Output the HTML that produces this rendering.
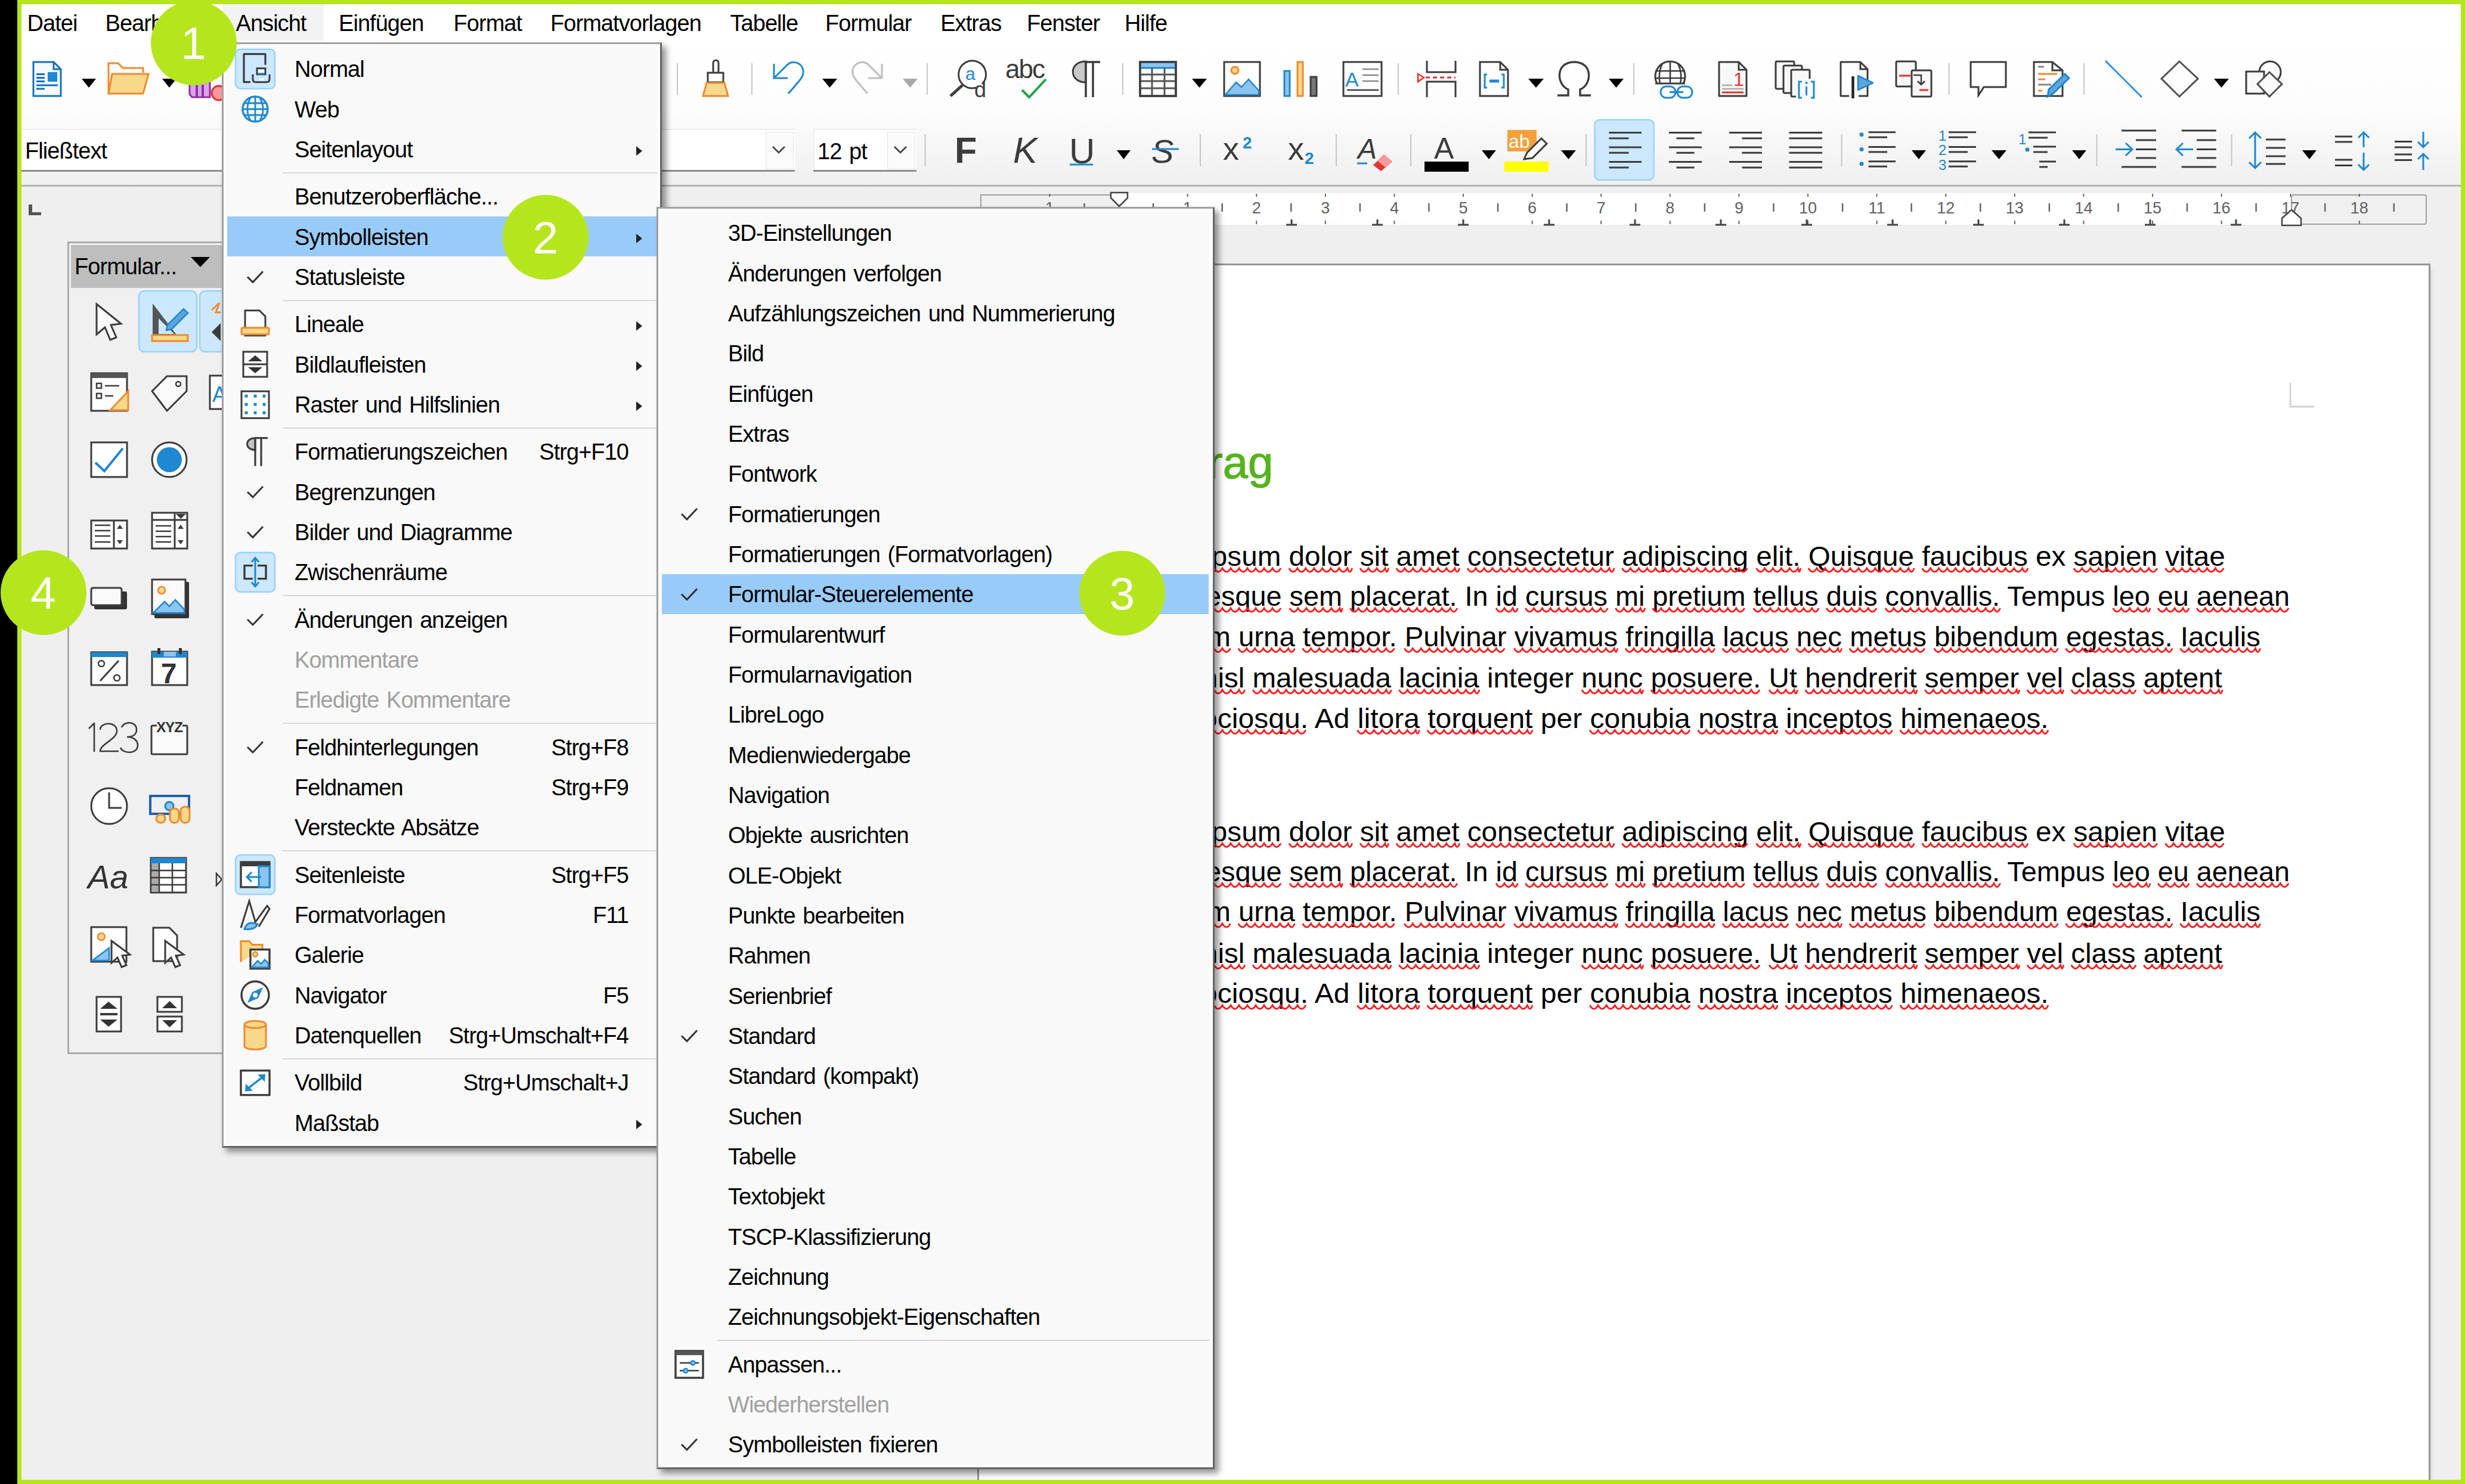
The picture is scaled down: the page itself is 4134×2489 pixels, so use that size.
<!DOCTYPE html><html><head><meta charset="utf-8"><title>LibreOffice Writer - Ansicht Symbolleisten</title><style>
html,body{margin:0;padding:0;}
body{width:4134px;height:2489px;position:relative;overflow:hidden;background:#000;font-family:"Liberation Sans", sans-serif;}
.t{position:absolute;line-height:1;white-space:nowrap;}
</style></head><body>
<div style="position:absolute;left:36px;top:7px;width:4091px;height:2475px;background:#efefef"></div>
<div style="position:absolute;left:36px;top:7px;width:4091px;height:63px;background:#ffffff"></div>
<div style="position:absolute;left:374px;top:7px;width:169px;height:61px;background:#f3f3f3"></div>
<div class="t" style="left:45.5px;top:20.3px;font-size:38px;color:#000;letter-spacing:-0.95px;font-weight:normal;word-spacing:3px;">Datei</div>
<div class="t" style="left:176.5px;top:20.3px;font-size:38px;color:#000;letter-spacing:-0.95px;font-weight:normal;word-spacing:3px;">Bearbeiten</div>
<div class="t" style="left:395.5px;top:20.3px;font-size:38px;color:#000;letter-spacing:-0.95px;font-weight:normal;word-spacing:3px;">Ansicht</div>
<div class="t" style="left:568.0px;top:20.3px;font-size:38px;color:#000;letter-spacing:-0.95px;font-weight:normal;word-spacing:3px;">Einfügen</div>
<div class="t" style="left:760.5px;top:20.3px;font-size:38px;color:#000;letter-spacing:-0.95px;font-weight:normal;word-spacing:3px;">Format</div>
<div class="t" style="left:923.0px;top:20.3px;font-size:38px;color:#000;letter-spacing:-0.95px;font-weight:normal;word-spacing:3px;">Formatvorlagen</div>
<div class="t" style="left:1224.5px;top:20.3px;font-size:38px;color:#000;letter-spacing:-0.95px;font-weight:normal;word-spacing:3px;">Tabelle</div>
<div class="t" style="left:1384.1px;top:20.3px;font-size:38px;color:#000;letter-spacing:-0.95px;font-weight:normal;word-spacing:3px;">Formular</div>
<div class="t" style="left:1577.2px;top:20.3px;font-size:38px;color:#000;letter-spacing:-0.95px;font-weight:normal;word-spacing:3px;">Extras</div>
<div class="t" style="left:1722.1px;top:20.3px;font-size:38px;color:#000;letter-spacing:-0.95px;font-weight:normal;word-spacing:3px;">Fenster</div>
<div class="t" style="left:1886.0px;top:20.3px;font-size:38px;color:#000;letter-spacing:-0.95px;font-weight:normal;word-spacing:3px;">Hilfe</div>
<div style="position:absolute;left:36px;top:70px;width:4091px;height:241px;background:linear-gradient(to bottom,#ffffff 0%,#fdfdfd 45%,#f6f6f6 75%,#efefef 100%)"></div>
<div style="position:absolute;left:36px;top:310px;width:4091px;height:3px;background:#b4b4b4"></div>
<div style="position:absolute;left:36px;top:216px;width:1297px;height:70px;background:#ffffff;box-shadow:inset 0 2px 0 #ececec"></div>
<div style="position:absolute;left:36px;top:285px;width:1297px;height:3px;background:#8c8c8c"></div>
<div class="t" style="left:42.0px;top:233.8px;font-size:38px;color:#000;letter-spacing:-0.95px;font-weight:normal;word-spacing:3px;">Fließtext</div>
<div style="position:absolute;left:1284px;top:221px;width:47px;height:63px;background:#fbfbfb;box-shadow:inset 0 0 0 1px #e4e4e4"></div>
<div style="position:absolute;left:1364px;top:216px;width:173px;height:70px;background:#ffffff;box-shadow:inset 0 2px 0 #ececec, inset 2px 0 0 #f0f0f0"></div>
<div style="position:absolute;left:1364px;top:285px;width:173px;height:3px;background:#8c8c8c"></div>
<div style="position:absolute;left:1488px;top:221px;width:47px;height:63px;background:#fbfbfb;box-shadow:inset 0 0 0 1px #e4e4e4"></div>
<div class="t" style="left:1371.0px;top:234.8px;font-size:38px;color:#000;letter-spacing:-0.95px;font-weight:normal;word-spacing:3px;">12 pt</div>
<svg style="position:absolute;left:0px;top:60px;" width="4134" height="260" viewBox="0 60 4134 260"><path d="M56,104 H90 L102,116 V161 H56 Z" stroke="#1470bf" stroke-width="3.0" fill="#f7f9fc" /><path d="M90,104 V116 H102" stroke="#1470bf" stroke-width="3.0" fill="none" /><line x1="61" y1="124.5" x2="75" y2="124.5" stroke="#1470bf" stroke-width="3" stroke-linecap="butt"/><line x1="61" y1="130.5" x2="75" y2="130.5" stroke="#1470bf" stroke-width="3" stroke-linecap="butt"/><line x1="61" y1="136.5" x2="75" y2="136.5" stroke="#1470bf" stroke-width="3" stroke-linecap="butt"/><line x1="61" y1="143" x2="97" y2="143" stroke="#1470bf" stroke-width="3" stroke-linecap="butt"/><line x1="61" y1="149" x2="75" y2="149" stroke="#1470bf" stroke-width="3" stroke-linecap="butt"/><rect x="80" y="121" width="16" height="16" stroke="none" stroke-width="3.0" fill="#1e88d0" rx="0"/><polygon points="137,132 161,132 149.0,147" fill="#000"/><path d="M182,157 V106 H198 L206,114 H240 V122" stroke="#ef8a2e" stroke-width="3.0" fill="#fafafa" /><path d="M188,124 H249 L240,157 H182 Z" stroke="#ef8a2e" stroke-width="3.0" fill="#f8d98b" /><polygon points="272,132 296,132 284.0,147" fill="#000"/><path d="M318,130 H352 V163 H322 L318,158 Z" stroke="#8f2ea6" stroke-width="3.0" fill="#d9a3e6" /><line x1="330" y1="142" x2="330" y2="162" stroke="#8f2ea6" stroke-width="4" stroke-linecap="butt"/><line x1="340" y1="142" x2="340" y2="162" stroke="#8f2ea6" stroke-width="4" stroke-linecap="butt"/><circle cx="367" cy="156" r="12" stroke="#e5312f" stroke-width="3.0" fill="#f99"/><rect x="1135" y="106" width="2" height="53" fill="#c6c6c6"/><rect x="1196" y="101" width="9" height="22" stroke="#3c3c3c" stroke-width="3.0" fill="#fff" rx="4.5"/><rect x="1187" y="122" width="26" height="16" stroke="#3c3c3c" stroke-width="3.0" fill="#fff" rx="0"/><path d="M1185,139 H1215 L1221,161 H1179 Z" stroke="#ef8a2e" stroke-width="3.0" fill="#f8d98b" /><rect x="1260" y="106" width="2" height="53" fill="#c6c6c6"/><path d="M1298,107 V131 H1321" stroke="#1e88d0" stroke-width="3.0" fill="none" /><path d="M1299,130 L1320,109 C1330,99 1349,106 1347,123 C1346,131 1340,136 1322,157" stroke="#1e88d0" stroke-width="3.0" fill="none" /><polygon points="1379,132 1404,132 1391.5,147" fill="#000"/><path d="M1479,107 V131 H1456" stroke="#bdbdbd" stroke-width="3.0" fill="none" /><path d="M1478,130 L1457,109 C1447,99 1428,106 1430,123 C1431,131 1437,136 1455,157" stroke="#bdbdbd" stroke-width="3.0" fill="none" /><polygon points="1514,132 1539,132 1526.5,147" fill="#a9a9a9"/><rect x="1554" y="106" width="2" height="53" fill="#c6c6c6"/><path d="M1647,141 A23,23 0 1 0 1637,147" stroke="#3c3c3c" stroke-width="3" fill="none" /><line x1="1594" y1="161" x2="1614" y2="143" stroke="#3c3c3c" stroke-width="5" stroke-linecap="butt"/><text x="1619" y="134" font-family="Liberation Sans" font-size="30" fill="#1e88d0" font-weight="normal" font-style="normal" text-anchor="start" letter-spacing="0">a</text><text x="1634" y="163" font-family="Liberation Sans" font-size="36" fill="#3c3c3c" font-weight="normal" font-style="normal" text-anchor="start" letter-spacing="0">d</text><text x="1686" y="131" font-family="Liberation Sans" font-size="44" fill="#3c3c3c" font-weight="normal" font-style="normal" text-anchor="start" letter-spacing="-2">abc</text><path d="M1714,151 L1726,163 L1754,133" stroke="#1ea446" stroke-width="4" fill="none" /><path d="M1821,103 C1792,103 1792,138 1821,138 Z" stroke="#3c3c3c" stroke-width="3" fill="#c8c8c8" /><line x1="1819" y1="104" x2="1845" y2="104" stroke="#3c3c3c" stroke-width="3.5" stroke-linecap="butt"/><line x1="1821" y1="103" x2="1821" y2="163" stroke="#3c3c3c" stroke-width="3.5" stroke-linecap="butt"/><line x1="1833" y1="103" x2="1833" y2="163" stroke="#3c3c3c" stroke-width="3.5" stroke-linecap="butt"/><rect x="1882" y="106" width="2" height="53" fill="#c6c6c6"/><rect x="1912" y="104" width="60" height="57" stroke="#3c3c3c" stroke-width="3.0" fill="#fff" rx="0"/><rect x="1912" y="104" width="60" height="10" stroke="#1e88d0" stroke-width="3" fill="#8cc4ee" rx="0"/><line x1="1912" y1="125" x2="1972" y2="125" stroke="#555" stroke-width="3" stroke-linecap="butt"/><line x1="1912" y1="136" x2="1972" y2="136" stroke="#555" stroke-width="3" stroke-linecap="butt"/><line x1="1912" y1="148" x2="1972" y2="148" stroke="#555" stroke-width="3" stroke-linecap="butt"/><line x1="1932" y1="114" x2="1932" y2="161" stroke="#555" stroke-width="3" stroke-linecap="butt"/><line x1="1953" y1="114" x2="1953" y2="161" stroke="#555" stroke-width="3" stroke-linecap="butt"/><rect x="1912" y="104" width="60" height="57" stroke="#3c3c3c" stroke-width="3.4" fill="none" rx="0"/><polygon points="1999,132 2024,132 2011.5,147" fill="#000"/><rect x="2053" y="104" width="60" height="57" stroke="#3c3c3c" stroke-width="3.0" fill="#fff" rx="0"/><path d="M2055,159 L2073,138 L2082,146 L2094,133 L2111,152 V159 Z" stroke="#1e88d0" stroke-width="2.5" fill="#8cc4ee" /><circle cx="2071" cy="118" r="6" stroke="#ef8a2e" stroke-width="3.0" fill="#f8d98b"/><rect x="2154" y="119" width="9" height="42" stroke="#1e88d0" stroke-width="3.0" fill="#8cc4ee" rx="0"/><rect x="2176" y="104" width="9" height="57" stroke="#ef8a2e" stroke-width="3.0" fill="#f8d98b" rx="0"/><rect x="2198" y="129" width="10" height="32" stroke="#3c3c3c" stroke-width="3.0" fill="#777" rx="0"/><rect x="2253" y="104" width="64" height="57" stroke="#3c3c3c" stroke-width="3.0" fill="#fff" rx="0"/><text x="2256" y="145" font-family="Liberation Sans" font-size="34" fill="#1e88d0" font-weight="normal" font-style="normal" text-anchor="start" letter-spacing="0">A</text><line x1="2285" y1="116" x2="2312" y2="116" stroke="#888" stroke-width="2.5" stroke-linecap="butt"/><line x1="2285" y1="126" x2="2312" y2="126" stroke="#888" stroke-width="2.5" stroke-linecap="butt"/><line x1="2285" y1="136" x2="2312" y2="136" stroke="#888" stroke-width="2.5" stroke-linecap="butt"/><line x1="2259" y1="151" x2="2312" y2="151" stroke="#3c3c3c" stroke-width="2.5" stroke-linecap="butt"/><rect x="2344" y="106" width="2" height="53" fill="#c6c6c6"/><path d="M2393,102 V121 H2441 V102" stroke="#3c3c3c" stroke-width="3" fill="none" /><path d="M2393,163 V137 H2441 V163" stroke="#3c3c3c" stroke-width="3" fill="none" /><path d="M2391,130 H2441" stroke="#e5312f" stroke-width="3" fill="none" stroke-dasharray="7 5"/><polygon points="2378,124 2388,130 2378,137" fill="none" stroke="#e5312f" stroke-width="2.5"/><path d="M2482,104 H2516 L2529,117 V161 H2482 Z" stroke="#3c3c3c" stroke-width="3.0" fill="#fff" /><path d="M2516,104 V117 H2529" stroke="#3c3c3c" stroke-width="3" fill="none" /><path d="M2494,125 H2490 V147 H2494 M2518,125 H2522 V147 H2518" stroke="#1e88d0" stroke-width="3" fill="none" /><line x1="2498" y1="136" x2="2514" y2="136" stroke="#1e88d0" stroke-width="5" stroke-linecap="butt"/><polygon points="2563,132 2589,132 2576.0,147" fill="#000"/><path d="M2612,160 H2630 V150 C2610,142 2608,104 2640,104 C2672,104 2670,142 2650,150 V160 H2668" stroke="#3c3c3c" stroke-width="3.4" fill="none" /><polygon points="2698,132 2723,132 2710.5,147" fill="#000"/><rect x="2739" y="106" width="2" height="53" fill="#c6c6c6"/><clipPath id="gclip"><rect x="2760" y="95" width="90" height="46"/></clipPath><g clip-path="url(#gclip)"><circle cx="2801" cy="128" r="25" stroke="#3c3c3c" stroke-width="3" fill="none"/><path d="M2776,119 H2826 M2776,131 H2826 M2801,103 V141 M2788,107 C2782,118 2782,130 2784,141 M2814,107 C2820,118 2820,130 2818,141" stroke="#3c3c3c" stroke-width="2.6" fill="none" /></g><line x1="2776" y1="140" x2="2826" y2="140" stroke="#3c3c3c" stroke-width="3" stroke-linecap="butt"/><rect x="2785" y="145" width="25" height="19" stroke="#1e88d0" stroke-width="3" fill="none" rx="9.5"/><rect x="2813" y="145" width="25" height="19" stroke="#1e88d0" stroke-width="3" fill="none" rx="9.5"/><line x1="2800" y1="154.5" x2="2823" y2="154.5" stroke="#1e88d0" stroke-width="3" stroke-linecap="butt"/><path d="M2883,104 H2916 L2929,117 V161 H2883 Z" stroke="#3c3c3c" stroke-width="3" fill="#f8f8f8" stroke-linejoin="round"/><path d="M2916,104 V117 H2929" stroke="#3c3c3c" stroke-width="3" fill="none" /><text x="2907" y="144" font-family="Liberation Sans" font-size="32" fill="#e5312f" font-weight="normal" font-style="normal" text-anchor="start" letter-spacing="0">1</text><line x1="2888" y1="143" x2="2905" y2="143" stroke="#aaa" stroke-width="2.5" stroke-linecap="butt"/><line x1="2888" y1="149" x2="2924" y2="149" stroke="#aaa" stroke-width="2.5" stroke-linecap="butt"/><line x1="2888" y1="155" x2="2924" y2="155" stroke="#e5312f" stroke-width="3" stroke-linecap="butt"/><rect x="2978" y="103" width="31" height="46" stroke="#3c3c3c" stroke-width="3" fill="#f8f8f8" rx="2"/><rect x="2991" y="110" width="31" height="46" stroke="#3c3c3c" stroke-width="3" fill="#f8f8f8" rx="2"/><rect x="3004" y="117" width="31" height="45" stroke="#3c3c3c" stroke-width="3" fill="#f8f8f8" rx="2"/><rect x="3012" y="132" width="36" height="36" stroke="none" stroke-width="3.0" fill="#fafafa" rx="0"/><path d="M3022,137 H3017 V164 H3022 M3037,137 H3042 V164 H3037" stroke="#1e88d0" stroke-width="3" fill="none" /><line x1="3029.5" y1="145" x2="3029.5" y2="160" stroke="#1e88d0" stroke-width="3" stroke-linecap="butt"/><circle cx="3029.5" cy="139" r="2" stroke="none" stroke-width="3.0" fill="#1e88d0"/><path d="M3101,161 H3087 V104 H3120 L3132,116 V161 H3117" stroke="#3c3c3c" stroke-width="3" fill="none" stroke-linejoin="round"/><path d="M3120,104 V116 H3132" stroke="#3c3c3c" stroke-width="3" fill="none" /><line x1="3107.5" y1="128" x2="3107.5" y2="165" stroke="#222" stroke-width="4.5" stroke-linecap="butt"/><polygon points="3116,127 3141,139 3116,151" fill="#5ea4dd" stroke="#1e88d0" stroke-width="2.5" stroke-linejoin="round"/><rect x="3180" y="103" width="33" height="42" stroke="#3c3c3c" stroke-width="3" fill="#f8f8f8" rx="2"/><rect x="3206" y="118" width="33" height="44" stroke="#3c3c3c" stroke-width="3" fill="#f8f8f8" rx="2"/><line x1="3185" y1="127" x2="3206" y2="127" stroke="#e5312f" stroke-width="3" stroke-linecap="butt"/><line x1="3219" y1="151" x2="3234" y2="151" stroke="#e5312f" stroke-width="3" stroke-linecap="butt"/><path d="M3209,126 H3222 V142 M3216,136 L3222,142 L3228,136" stroke="#3c3c3c" stroke-width="2.5" fill="none" /><rect x="3267.6" y="106" width="2" height="53" fill="#c6c6c6"/><path d="M3305,104 H3364 V146 H3327 L3318,160 V146 H3305 Z" stroke="#3c3c3c" stroke-width="3.0" fill="#fff" /><path d="M3411,104 H3442 L3459,118 V161 H3411 Z" stroke="#3c3c3c" stroke-width="3.0" fill="#fff" /><path d="M3442,104 V118 H3459" stroke="#3c3c3c" stroke-width="3" fill="none" /><line x1="3418" y1="112" x2="3428" y2="112" stroke="#888" stroke-width="3" stroke-linecap="butt"/><line x1="3418" y1="124" x2="3450" y2="124" stroke="#ef8a2e" stroke-width="3" stroke-linecap="butt"/><line x1="3418" y1="133" x2="3430" y2="133" stroke="#ef8a2e" stroke-width="3" stroke-linecap="butt"/><line x1="3418" y1="142" x2="3440" y2="142" stroke="#888" stroke-width="3" stroke-linecap="butt"/><line x1="3418" y1="152" x2="3425" y2="152" stroke="#ef8a2e" stroke-width="3" stroke-linecap="butt"/><path d="M3434,162 L3436,150 L3463,124 L3470,131 L3443,157 Z" stroke="#1e88d0" stroke-width="3" fill="#5ea4dd" /><rect x="3494" y="106" width="2" height="53" fill="#c6c6c6"/><line x1="3531" y1="102" x2="3592" y2="163" stroke="#1e88d0" stroke-width="2.6" stroke-linecap="butt"/><polygon points="3655,103 3686,132 3655,162 3625,132" fill="none" stroke="#505050" stroke-width="3"/><polygon points="3713,132 3738,132 3725.5,147" fill="#000"/><circle cx="3807" cy="121" r="18" stroke="#3c3c3c" stroke-width="3.0" fill="none"/><rect x="3767" y="120" width="30" height="37" stroke="#3c3c3c" stroke-width="3.0" fill="#fafafa" rx="0"/><polygon points="3806,121 3827,141 3806,162 3786,141" fill="#fafafa" stroke="#505050" stroke-width="3"/><rect x="1550.5" y="225" width="2" height="54" fill="#c6c6c6"/><path d="M1296,246 L1306,256 L1316,246" stroke="#3c3c3c" stroke-width="2.5" fill="none" /><path d="M1500,246 L1510,256 L1520,246" stroke="#3c3c3c" stroke-width="2.5" fill="none" /><text x="1601" y="273" font-family="Liberation Sans" font-size="61" fill="#3c3c3c" font-weight="bold" font-style="normal" text-anchor="start" letter-spacing="0">F</text><text x="1699" y="273" font-family="Liberation Sans" font-size="61" fill="#3c3c3c" font-weight="normal" font-style="italic" text-anchor="start" letter-spacing="0">K</text><text x="1793" y="274" font-family="Liberation Sans" font-size="60" fill="#3c3c3c" font-weight="normal" font-style="normal" text-anchor="start" letter-spacing="0">U</text><line x1="1794" y1="276" x2="1833" y2="276" stroke="#1e88d0" stroke-width="3" stroke-linecap="butt"/><polygon points="1873,252 1896,252 1884.5,267" fill="#000"/><text x="1931" y="273" font-family="Liberation Sans" font-size="56" fill="#3c3c3c" font-weight="normal" font-style="italic" text-anchor="start" letter-spacing="0">S</text><line x1="1932" y1="250" x2="1977" y2="250" stroke="#1e88d0" stroke-width="3" stroke-linecap="butt"/><rect x="2012" y="225" width="2" height="54" fill="#c6c6c6"/><text x="2051" y="268" font-family="Liberation Sans" font-size="54" fill="#3c3c3c" font-weight="normal" font-style="normal" text-anchor="start" letter-spacing="0">x</text><text x="2084" y="249" font-family="Liberation Sans" font-size="28" fill="#1e88d0" font-weight="bold" font-style="normal" text-anchor="start" letter-spacing="0">2</text><text x="2160" y="268" font-family="Liberation Sans" font-size="54" fill="#3c3c3c" font-weight="normal" font-style="normal" text-anchor="start" letter-spacing="0">x</text><text x="2188" y="275" font-family="Liberation Sans" font-size="28" fill="#1e88d0" font-weight="bold" font-style="normal" text-anchor="start" letter-spacing="0">2</text><rect x="2240" y="225" width="2" height="54" fill="#c6c6c6"/><text x="2277" y="266" font-family="Liberation Sans" font-size="48" fill="#3c3c3c" font-weight="normal" font-style="italic" text-anchor="start" letter-spacing="0">A</text><line x1="2276" y1="274" x2="2293" y2="274" stroke="#1e88d0" stroke-width="3" stroke-linecap="butt"/><polygon points="2303,277 2321,259 2335,271 2316,287" fill="#e5312f"/><polygon points="2310,270 2321,259 2335,271 2324,281" fill="#f59a9a"/><rect x="2365" y="225" width="2" height="54" fill="#c6c6c6"/><text x="2405" y="266" font-family="Liberation Sans" font-size="50" fill="#3c3c3c" font-weight="normal" font-style="normal" text-anchor="start" letter-spacing="0">A</text><rect x="2389" y="271" width="74" height="17" stroke="none" stroke-width="3.0" fill="#000" rx="0"/><polygon points="2485,252 2509,252 2497.0,267" fill="#000"/><rect x="2528" y="218" width="49" height="36" stroke="none" stroke-width="3.0" fill="#f4a13c" rx="0"/><text x="2530" y="248" font-family="Liberation Sans" font-size="32" fill="#fff" font-weight="normal" font-style="normal" text-anchor="start" letter-spacing="0">ab</text><path d="M2556,267 L2561,256 L2585,232 L2594,241 L2570,265 Z" stroke="#3c3c3c" stroke-width="3" fill="#fafafa" /><rect x="2523" y="271" width="74" height="17" stroke="none" stroke-width="3.0" fill="#ffff00" rx="0"/><polygon points="2618,252 2643,252 2630.5,267" fill="#000"/><rect x="2659" y="225" width="2" height="54" fill="#c6c6c6"/><rect x="2674.5" y="201" width="99" height="101" stroke="#99d1ff" stroke-width="2.5" fill="#cce8ff" rx="8"/><line x1="2698.5" y1="222.5" x2="2753" y2="222.5" stroke="#3c3c3c" stroke-width="3" stroke-linecap="butt"/><line x1="2799" y1="222.5" x2="2854" y2="222.5" stroke="#3c3c3c" stroke-width="3" stroke-linecap="butt"/><line x1="2900" y1="222.5" x2="2955" y2="222.5" stroke="#3c3c3c" stroke-width="3" stroke-linecap="butt"/><line x1="3000.5" y1="222.5" x2="3056" y2="222.5" stroke="#3c3c3c" stroke-width="3" stroke-linecap="butt"/><line x1="2698.5" y1="232" x2="2731.5" y2="232" stroke="#3c3c3c" stroke-width="3" stroke-linecap="butt"/><line x1="2811.5" y1="232" x2="2841.5" y2="232" stroke="#3c3c3c" stroke-width="3" stroke-linecap="butt"/><line x1="2921.5" y1="232" x2="2955" y2="232" stroke="#3c3c3c" stroke-width="3" stroke-linecap="butt"/><line x1="3000.5" y1="232" x2="3056" y2="232" stroke="#3c3c3c" stroke-width="3" stroke-linecap="butt"/><line x1="2698.5" y1="247" x2="2753" y2="247" stroke="#3c3c3c" stroke-width="3" stroke-linecap="butt"/><line x1="2799" y1="247" x2="2854" y2="247" stroke="#3c3c3c" stroke-width="3" stroke-linecap="butt"/><line x1="2900" y1="247" x2="2955" y2="247" stroke="#3c3c3c" stroke-width="3" stroke-linecap="butt"/><line x1="3000.5" y1="247" x2="3056" y2="247" stroke="#3c3c3c" stroke-width="3" stroke-linecap="butt"/><line x1="2698.5" y1="256.3" x2="2731.5" y2="256.3" stroke="#3c3c3c" stroke-width="3" stroke-linecap="butt"/><line x1="2811.5" y1="256.3" x2="2841.5" y2="256.3" stroke="#3c3c3c" stroke-width="3" stroke-linecap="butt"/><line x1="2921.5" y1="256.3" x2="2955" y2="256.3" stroke="#3c3c3c" stroke-width="3" stroke-linecap="butt"/><line x1="3000.5" y1="256.3" x2="3056" y2="256.3" stroke="#3c3c3c" stroke-width="3" stroke-linecap="butt"/><line x1="2698.5" y1="271.6" x2="2753" y2="271.6" stroke="#3c3c3c" stroke-width="3" stroke-linecap="butt"/><line x1="2799" y1="271.6" x2="2854" y2="271.6" stroke="#3c3c3c" stroke-width="3" stroke-linecap="butt"/><line x1="2900" y1="271.6" x2="2955" y2="271.6" stroke="#3c3c3c" stroke-width="3" stroke-linecap="butt"/><line x1="3000.5" y1="271.6" x2="3056" y2="271.6" stroke="#3c3c3c" stroke-width="3" stroke-linecap="butt"/><line x1="2698.5" y1="281" x2="2731.5" y2="281" stroke="#3c3c3c" stroke-width="3" stroke-linecap="butt"/><line x1="2811.5" y1="281" x2="2841.5" y2="281" stroke="#3c3c3c" stroke-width="3" stroke-linecap="butt"/><line x1="2921.5" y1="281" x2="2955" y2="281" stroke="#3c3c3c" stroke-width="3" stroke-linecap="butt"/><line x1="3000.5" y1="281" x2="3056" y2="281" stroke="#3c3c3c" stroke-width="3" stroke-linecap="butt"/><rect x="3087.6" y="225" width="2" height="54" fill="#c6c6c6"/><circle cx="3122" cy="225.7" r="3.5" stroke="none" stroke-width="3.0" fill="#1e88d0"/><line x1="3133.6" y1="221.7" x2="3179" y2="221.7" stroke="#3c3c3c" stroke-width="3" stroke-linecap="butt"/><line x1="3133.6" y1="230.2" x2="3165" y2="230.2" stroke="#3c3c3c" stroke-width="3" stroke-linecap="butt"/><circle cx="3122" cy="250.4" r="3.5" stroke="none" stroke-width="3.0" fill="#1e88d0"/><line x1="3133.6" y1="246.4" x2="3179" y2="246.4" stroke="#3c3c3c" stroke-width="3" stroke-linecap="butt"/><line x1="3133.6" y1="254.9" x2="3165" y2="254.9" stroke="#3c3c3c" stroke-width="3" stroke-linecap="butt"/><circle cx="3122" cy="274.7" r="3.5" stroke="none" stroke-width="3.0" fill="#1e88d0"/><line x1="3133.6" y1="270.7" x2="3179" y2="270.7" stroke="#3c3c3c" stroke-width="3" stroke-linecap="butt"/><line x1="3133.6" y1="279.2" x2="3165" y2="279.2" stroke="#3c3c3c" stroke-width="3" stroke-linecap="butt"/><polygon points="3206,252 3230,252 3218.0,267" fill="#000"/><text x="3251" y="235.7" font-family="Liberation Sans" font-size="24" fill="#1e88d0" font-weight="normal" font-style="normal" text-anchor="start" letter-spacing="0">1</text><line x1="3268" y1="221.7" x2="3314" y2="221.7" stroke="#3c3c3c" stroke-width="3" stroke-linecap="butt"/><line x1="3268" y1="230.2" x2="3300" y2="230.2" stroke="#3c3c3c" stroke-width="3" stroke-linecap="butt"/><text x="3251" y="260.4" font-family="Liberation Sans" font-size="24" fill="#1e88d0" font-weight="normal" font-style="normal" text-anchor="start" letter-spacing="0">2</text><line x1="3268" y1="246.4" x2="3314" y2="246.4" stroke="#3c3c3c" stroke-width="3" stroke-linecap="butt"/><line x1="3268" y1="254.9" x2="3300" y2="254.9" stroke="#3c3c3c" stroke-width="3" stroke-linecap="butt"/><text x="3251" y="284.7" font-family="Liberation Sans" font-size="24" fill="#1e88d0" font-weight="normal" font-style="normal" text-anchor="start" letter-spacing="0">3</text><line x1="3268" y1="270.7" x2="3314" y2="270.7" stroke="#3c3c3c" stroke-width="3" stroke-linecap="butt"/><line x1="3268" y1="279.2" x2="3300" y2="279.2" stroke="#3c3c3c" stroke-width="3" stroke-linecap="butt"/><polygon points="3340,252 3365,252 3352.5,267" fill="#000"/><text x="3385" y="242" font-family="Liberation Sans" font-size="24" fill="#1e88d0" font-weight="normal" font-style="normal" text-anchor="start" letter-spacing="0">1</text><line x1="3402" y1="222" x2="3448" y2="222" stroke="#3c3c3c" stroke-width="3" stroke-linecap="butt"/><line x1="3402" y1="231" x2="3434" y2="231" stroke="#3c3c3c" stroke-width="3" stroke-linecap="butt"/><circle cx="3400" cy="251" r="3.5" stroke="none" stroke-width="3.0" fill="#1e88d0"/><line x1="3410" y1="246" x2="3448" y2="246" stroke="#3c3c3c" stroke-width="3" stroke-linecap="butt"/><line x1="3410" y1="255" x2="3434" y2="255" stroke="#3c3c3c" stroke-width="3" stroke-linecap="butt"/><line x1="3420" y1="271" x2="3448" y2="271" stroke="#3c3c3c" stroke-width="3" stroke-linecap="butt"/><line x1="3420" y1="280" x2="3434" y2="280" stroke="#3c3c3c" stroke-width="3" stroke-linecap="butt"/><polygon points="3475,252 3499,252 3487.0,267" fill="#000"/><rect x="3515.5" y="225" width="2" height="54" fill="#c6c6c6"/><line x1="3558" y1="219" x2="3616" y2="219" stroke="#3c3c3c" stroke-width="3" stroke-linecap="butt"/><line x1="3558" y1="280" x2="3616" y2="280" stroke="#3c3c3c" stroke-width="3" stroke-linecap="butt"/><line x1="3582" y1="235" x2="3616" y2="235" stroke="#3c3c3c" stroke-width="3" stroke-linecap="butt"/><line x1="3684" y1="235" x2="3716.6" y2="235" stroke="#3c3c3c" stroke-width="3" stroke-linecap="butt"/><line x1="3582" y1="250.4" x2="3616" y2="250.4" stroke="#3c3c3c" stroke-width="3" stroke-linecap="butt"/><line x1="3684" y1="250.4" x2="3716.6" y2="250.4" stroke="#3c3c3c" stroke-width="3" stroke-linecap="butt"/><line x1="3582" y1="265" x2="3616" y2="265" stroke="#3c3c3c" stroke-width="3" stroke-linecap="butt"/><line x1="3684" y1="265" x2="3716.6" y2="265" stroke="#3c3c3c" stroke-width="3" stroke-linecap="butt"/><line x1="3658.7" y1="219" x2="3716.6" y2="219" stroke="#3c3c3c" stroke-width="3" stroke-linecap="butt"/><line x1="3658.7" y1="280" x2="3716.6" y2="280" stroke="#3c3c3c" stroke-width="3" stroke-linecap="butt"/><path d="M3548,250.4 H3576 M3565,240 L3576,250.4 L3565,261" stroke="#1e88d0" stroke-width="3" fill="none" /><path d="M3678,250.4 H3650 M3661,240 L3650,250.4 L3661,261" stroke="#1e88d0" stroke-width="3" fill="none" /><rect x="3741.6" y="225" width="2" height="54" fill="#c6c6c6"/><path d="M3782,222 V282 M3772,232 L3782,222 L3792,232 M3772,272 L3782,282 L3792,272" stroke="#1e88d0" stroke-width="3" fill="none" /><line x1="3800" y1="234" x2="3833" y2="234" stroke="#3c3c3c" stroke-width="3" stroke-linecap="butt"/><line x1="3800" y1="248" x2="3833" y2="248" stroke="#3c3c3c" stroke-width="3" stroke-linecap="butt"/><line x1="3800" y1="262" x2="3833" y2="262" stroke="#3c3c3c" stroke-width="3" stroke-linecap="butt"/><line x1="3800" y1="275" x2="3833" y2="275" stroke="#3c3c3c" stroke-width="3" stroke-linecap="butt"/><polygon points="3861,252 3885,252 3873.0,267" fill="#000"/><line x1="3916" y1="229" x2="3945" y2="229" stroke="#3c3c3c" stroke-width="3" stroke-linecap="butt"/><line x1="3916" y1="238" x2="3945" y2="238" stroke="#3c3c3c" stroke-width="3" stroke-linecap="butt"/><line x1="3916" y1="268" x2="3945" y2="268" stroke="#3c3c3c" stroke-width="3" stroke-linecap="butt"/><line x1="3916" y1="277.5" x2="3945" y2="277.5" stroke="#3c3c3c" stroke-width="3" stroke-linecap="butt"/><path d="M3964,247 V222 M3955,231 L3964,222 L3973,231 M3964,256 V285 M3955,276 L3964,285 L3973,276" stroke="#1e88d0" stroke-width="3" fill="none" /><line x1="4016" y1="237.5" x2="4045" y2="237.5" stroke="#3c3c3c" stroke-width="3" stroke-linecap="butt"/><line x1="4016" y1="247" x2="4045" y2="247" stroke="#3c3c3c" stroke-width="3" stroke-linecap="butt"/><line x1="4016" y1="259" x2="4045" y2="259" stroke="#3c3c3c" stroke-width="3" stroke-linecap="butt"/><line x1="4016" y1="268.5" x2="4045" y2="268.5" stroke="#3c3c3c" stroke-width="3" stroke-linecap="butt"/><path d="M4064,221 V247 M4055,238 L4064,247 L4073,238 M4064,285 V258 M4055,267 L4064,258 L4073,267" stroke="#1e88d0" stroke-width="3" fill="none" /></svg>
<svg style="position:absolute;left:1100px;top:315px;" width="3034" height="70" viewBox="1100 315 3034 70"><rect x="1876" y="324" width="1967" height="53" fill="#ffffff"/><rect x="1645" y="327" width="231" height="49" fill="#f0f0f0" stroke="#a0a0a0" stroke-width="2"/><rect x="3843" y="327" width="226" height="49" fill="#f0f0f0" stroke="#a0a0a0" stroke-width="2" rx="3"/><text x="1760.4" y="357.5" font-family="Liberation Sans" font-size="27" fill="#606060" text-anchor="middle">1</text><rect x="1759.4" y="325" width="2" height="5" fill="#666"/><rect x="1759.4" y="370" width="2" height="6" fill="#666"/><rect x="1817.2" y="341" width="2.5" height="14" fill="#666"/><rect x="1875.0" y="325" width="2" height="5" fill="#666"/><rect x="1875.0" y="370" width="2" height="6" fill="#666"/><rect x="1932.8" y="341" width="2.5" height="14" fill="#666"/><text x="1991.6" y="357.5" font-family="Liberation Sans" font-size="27" fill="#606060" text-anchor="middle">1</text><rect x="1990.6" y="325" width="2" height="5" fill="#666"/><rect x="1990.6" y="370" width="2" height="6" fill="#666"/><rect x="2048.4" y="341" width="2.5" height="14" fill="#666"/><text x="2107.2" y="357.5" font-family="Liberation Sans" font-size="27" fill="#606060" text-anchor="middle">2</text><rect x="2106.2" y="325" width="2" height="5" fill="#666"/><rect x="2106.2" y="370" width="2" height="6" fill="#666"/><rect x="2164.0" y="341" width="2.5" height="14" fill="#666"/><text x="2222.8" y="357.5" font-family="Liberation Sans" font-size="27" fill="#606060" text-anchor="middle">3</text><rect x="2221.8" y="325" width="2" height="5" fill="#666"/><rect x="2221.8" y="370" width="2" height="6" fill="#666"/><rect x="2279.6" y="341" width="2.5" height="14" fill="#666"/><text x="2338.4" y="357.5" font-family="Liberation Sans" font-size="27" fill="#606060" text-anchor="middle">4</text><rect x="2337.4" y="325" width="2" height="5" fill="#666"/><rect x="2337.4" y="370" width="2" height="6" fill="#666"/><rect x="2395.2" y="341" width="2.5" height="14" fill="#666"/><text x="2454.0" y="357.5" font-family="Liberation Sans" font-size="27" fill="#606060" text-anchor="middle">5</text><rect x="2453.0" y="325" width="2" height="5" fill="#666"/><rect x="2453.0" y="370" width="2" height="6" fill="#666"/><rect x="2510.8" y="341" width="2.5" height="14" fill="#666"/><text x="2569.6" y="357.5" font-family="Liberation Sans" font-size="27" fill="#606060" text-anchor="middle">6</text><rect x="2568.6" y="325" width="2" height="5" fill="#666"/><rect x="2568.6" y="370" width="2" height="6" fill="#666"/><rect x="2626.4" y="341" width="2.5" height="14" fill="#666"/><text x="2685.2" y="357.5" font-family="Liberation Sans" font-size="27" fill="#606060" text-anchor="middle">7</text><rect x="2684.2" y="325" width="2" height="5" fill="#666"/><rect x="2684.2" y="370" width="2" height="6" fill="#666"/><rect x="2742.0" y="341" width="2.5" height="14" fill="#666"/><text x="2800.8" y="357.5" font-family="Liberation Sans" font-size="27" fill="#606060" text-anchor="middle">8</text><rect x="2799.8" y="325" width="2" height="5" fill="#666"/><rect x="2799.8" y="370" width="2" height="6" fill="#666"/><rect x="2857.6" y="341" width="2.5" height="14" fill="#666"/><text x="2916.4" y="357.5" font-family="Liberation Sans" font-size="27" fill="#606060" text-anchor="middle">9</text><rect x="2915.4" y="325" width="2" height="5" fill="#666"/><rect x="2915.4" y="370" width="2" height="6" fill="#666"/><rect x="2973.2" y="341" width="2.5" height="14" fill="#666"/><text x="3032.0" y="357.5" font-family="Liberation Sans" font-size="27" fill="#606060" text-anchor="middle">10</text><rect x="3031.0" y="325" width="2" height="5" fill="#666"/><rect x="3031.0" y="370" width="2" height="6" fill="#666"/><rect x="3088.8" y="341" width="2.5" height="14" fill="#666"/><text x="3147.6" y="357.5" font-family="Liberation Sans" font-size="27" fill="#606060" text-anchor="middle">11</text><rect x="3146.6" y="325" width="2" height="5" fill="#666"/><rect x="3146.6" y="370" width="2" height="6" fill="#666"/><rect x="3204.4" y="341" width="2.5" height="14" fill="#666"/><text x="3263.2" y="357.5" font-family="Liberation Sans" font-size="27" fill="#606060" text-anchor="middle">12</text><rect x="3262.2" y="325" width="2" height="5" fill="#666"/><rect x="3262.2" y="370" width="2" height="6" fill="#666"/><rect x="3320.0" y="341" width="2.5" height="14" fill="#666"/><text x="3378.8" y="357.5" font-family="Liberation Sans" font-size="27" fill="#606060" text-anchor="middle">13</text><rect x="3377.8" y="325" width="2" height="5" fill="#666"/><rect x="3377.8" y="370" width="2" height="6" fill="#666"/><rect x="3435.6" y="341" width="2.5" height="14" fill="#666"/><text x="3494.4" y="357.5" font-family="Liberation Sans" font-size="27" fill="#606060" text-anchor="middle">14</text><rect x="3493.4" y="325" width="2" height="5" fill="#666"/><rect x="3493.4" y="370" width="2" height="6" fill="#666"/><rect x="3551.2" y="341" width="2.5" height="14" fill="#666"/><text x="3610.0" y="357.5" font-family="Liberation Sans" font-size="27" fill="#606060" text-anchor="middle">15</text><rect x="3609.0" y="325" width="2" height="5" fill="#666"/><rect x="3609.0" y="370" width="2" height="6" fill="#666"/><rect x="3666.8" y="341" width="2.5" height="14" fill="#666"/><text x="3725.6" y="357.5" font-family="Liberation Sans" font-size="27" fill="#606060" text-anchor="middle">16</text><rect x="3724.6" y="325" width="2" height="5" fill="#666"/><rect x="3724.6" y="370" width="2" height="6" fill="#666"/><rect x="3782.4" y="341" width="2.5" height="14" fill="#666"/><text x="3841.2" y="357.5" font-family="Liberation Sans" font-size="27" fill="#606060" text-anchor="middle">17</text><rect x="3840.2" y="325" width="2" height="5" fill="#666"/><rect x="3840.2" y="370" width="2" height="6" fill="#666"/><rect x="3898.0" y="341" width="2.5" height="14" fill="#666"/><text x="3956.8" y="357.5" font-family="Liberation Sans" font-size="27" fill="#606060" text-anchor="middle">18</text><rect x="3955.8" y="325" width="2" height="5" fill="#666"/><rect x="3955.8" y="370" width="2" height="6" fill="#666"/><rect x="4013.6" y="341" width="2.5" height="14" fill="#666"/><path d="M2022.0,368 V377 M2013.0,377 H2031.0" stroke="#444" stroke-width="3" fill="none"/><path d="M2166.0,368 V377 M2157.0,377 H2175.0" stroke="#444" stroke-width="3" fill="none"/><path d="M2310.0,368 V377 M2301.0,377 H2319.0" stroke="#444" stroke-width="3" fill="none"/><path d="M2454.0,368 V377 M2445.0,377 H2463.0" stroke="#444" stroke-width="3" fill="none"/><path d="M2598.0,368 V377 M2589.0,377 H2607.0" stroke="#444" stroke-width="3" fill="none"/><path d="M2742.0,368 V377 M2733.0,377 H2751.0" stroke="#444" stroke-width="3" fill="none"/><path d="M2886.0,368 V377 M2877.0,377 H2895.0" stroke="#444" stroke-width="3" fill="none"/><path d="M3030.0,368 V377 M3021.0,377 H3039.0" stroke="#444" stroke-width="3" fill="none"/><path d="M3174.0,368 V377 M3165.0,377 H3183.0" stroke="#444" stroke-width="3" fill="none"/><path d="M3318.0,368 V377 M3309.0,377 H3327.0" stroke="#444" stroke-width="3" fill="none"/><path d="M3462.0,368 V377 M3453.0,377 H3471.0" stroke="#444" stroke-width="3" fill="none"/><path d="M3606.0,368 V377 M3597.0,377 H3615.0" stroke="#444" stroke-width="3" fill="none"/><path d="M3750.0,368 V377 M3741.0,377 H3759.0" stroke="#444" stroke-width="3" fill="none"/><path d="M1863,323 H1891 V332 L1877,346 L1863,332 Z" fill="#fff" stroke="#444" stroke-width="2.5"/><path d="M3827,378 H3859 V366 L3843,352 L3827,366 Z" fill="#fff" stroke="#444" stroke-width="2.5"/></svg>
<div style="position:absolute;left:1642px;top:445px;width:2431px;height:2100px;background:#ffffff;box-shadow:0 0 0 3px #969696, 4px 4px 6px rgba(0,0,0,0.15)"></div>
<svg style="position:absolute;left:1600px;top:600px;" width="2500" height="120" viewBox="1600 600 2500 120"><path d="M3841,642 V682 H3881" stroke="#d2d2d2" stroke-width="2.8" fill="none"/></svg>
<div class="t" style="left:2025.5px;top:737.7px;font-size:76px;color:#55b31d;letter-spacing:0px;font-weight:normal;-webkit-text-stroke:1.2px #55b31d;">rag</div>
<div class="t doc" style="left:1873.23px;transform:scaleX(1.03551);top:910.1px;font-size:46px;letter-spacing:0px;color:#000;transform-origin:0 0;"><span>Lorem</span> <span>ipsum</span> <span>dolor</span> <span>sit</span> <span>amet</span> <span>consectetur</span> <span>adipiscing</span> <span>elit.</span> <span>Quisque</span> <span>faucibus</span> <span>ex</span> <span>sapien</span> <span>vitae</span></div>
<div class="t doc" style="left:1884.40px;transform:scaleX(1.01765);top:977.1px;font-size:46px;letter-spacing:0px;color:#000;transform-origin:0 0;"><span>pellentesque</span> <span>sem</span> <span>placerat.</span> <span>In</span> <span>id</span> <span>cursus</span> <span>mi</span> <span>pretium</span> <span>tellus</span> <span>duis</span> <span>convallis.</span> <span>Tempus</span> <span>leo</span> <span>eu</span> <span>aenean</span></div>
<div class="t doc" style="left:1871.66px;transform:scaleX(1.02799);top:1044.6px;font-size:46px;letter-spacing:0px;color:#000;transform-origin:0 0;"><span>sed</span> <span>diam</span> <span>urna</span> <span>tempor.</span> <span>Pulvinar</span> <span>vivamus</span> <span>fringilla</span> <span>lacus</span> <span>nec</span> <span>metus</span> <span>bibendum</span> <span>egestas.</span> <span>Iaculis</span></div>
<div class="t doc" style="left:1863.47px;transform:scaleX(1.03239);top:1114.1px;font-size:46px;letter-spacing:0px;color:#000;transform-origin:0 0;"><span>massa</span> <span>nisl</span> <span>malesuada</span> <span>lacinia</span> <span>integer</span> <span>nunc</span> <span>posuere.</span> <span>Ut</span> <span>hendrerit</span> <span>semper</span> <span>vel</span> <span>class</span> <span>aptent</span></div>
<div class="t doc" style="left:1878.50px;transform:scaleX(1.04402);top:1181.6px;font-size:46px;letter-spacing:0px;color:#000;transform-origin:0 0;"><span>taciti</span> <span>sociosqu.</span> <span>Ad</span> <span>litora</span> <span>torquent</span> <span>per</span> <span>conubia</span> <span>nostra</span> <span>inceptos</span> <span>himenaeos.</span></div>
<div class="t doc" style="left:1873.23px;transform:scaleX(1.03551);top:1371.6px;font-size:46px;letter-spacing:0px;color:#000;transform-origin:0 0;"><span>Lorem</span> <span>ipsum</span> <span>dolor</span> <span>sit</span> <span>amet</span> <span>consectetur</span> <span>adipiscing</span> <span>elit.</span> <span>Quisque</span> <span>faucibus</span> <span>ex</span> <span>sapien</span> <span>vitae</span></div>
<div class="t doc" style="left:1884.40px;transform:scaleX(1.01765);top:1438.6px;font-size:46px;letter-spacing:0px;color:#000;transform-origin:0 0;"><span>pellentesque</span> <span>sem</span> <span>placerat.</span> <span>In</span> <span>id</span> <span>cursus</span> <span>mi</span> <span>pretium</span> <span>tellus</span> <span>duis</span> <span>convallis.</span> <span>Tempus</span> <span>leo</span> <span>eu</span> <span>aenean</span></div>
<div class="t doc" style="left:1871.66px;transform:scaleX(1.02799);top:1506.1px;font-size:46px;letter-spacing:0px;color:#000;transform-origin:0 0;"><span>sed</span> <span>diam</span> <span>urna</span> <span>tempor.</span> <span>Pulvinar</span> <span>vivamus</span> <span>fringilla</span> <span>lacus</span> <span>nec</span> <span>metus</span> <span>bibendum</span> <span>egestas.</span> <span>Iaculis</span></div>
<div class="t doc" style="left:1863.47px;transform:scaleX(1.03239);top:1575.6px;font-size:46px;letter-spacing:0px;color:#000;transform-origin:0 0;"><span>massa</span> <span>nisl</span> <span>malesuada</span> <span>lacinia</span> <span>integer</span> <span>nunc</span> <span>posuere.</span> <span>Ut</span> <span>hendrerit</span> <span>semper</span> <span>vel</span> <span>class</span> <span>aptent</span></div>
<div class="t doc" style="left:1878.50px;transform:scaleX(1.04402);top:1643.1px;font-size:46px;letter-spacing:0px;color:#000;transform-origin:0 0;"><span>taciti</span> <span>sociosqu.</span> <span>Ad</span> <span>litora</span> <span>torquent</span> <span>per</span> <span>conubia</span> <span>nostra</span> <span>inceptos</span> <span>himenaeos.</span></div>
<svg style="position:absolute;left:2030px;top:900px;" width="1850" height="800" viewBox="2030 900 1850 800"><path d="M2036.0,953.0 Q2043.0,965.0 2050.0,953.0 Q2057.0,965.0 2064.0,953.0 Q2071.0,965.0 2078.0,953.0 Q2085.0,965.0 2092.0,953.0 Q2099.0,965.0 2106.0,953.0 Q2113.0,965.0 2120.0,953.0 Q2127.0,965.0 2134.0,953.0 Q2141.0,965.0 2148.0,953.0" stroke="#ff1a1a" stroke-width="2.8" fill="none"/><path d="M2161.8,953.0 Q2168.8,965.0 2175.8,953.0 Q2182.8,965.0 2189.8,953.0 Q2196.8,965.0 2203.8,953.0 Q2210.8,965.0 2217.8,953.0 Q2224.8,965.0 2231.8,953.0 Q2238.8,965.0 2245.8,953.0 Q2252.8,965.0 2259.8,953.0 Q2263.8,965.0 2267.7,953.0" stroke="#ff1a1a" stroke-width="2.8" fill="none"/><path d="M2281.0,953.0 Q2288.0,965.0 2295.0,953.0 Q2302.0,965.0 2309.0,953.0 Q2316.0,965.0 2323.0,953.0 Q2325.8,965.0 2328.6,953.0" stroke="#ff1a1a" stroke-width="2.8" fill="none"/><path d="M2341.8,953.0 Q2348.8,965.0 2355.8,953.0 Q2362.8,965.0 2369.8,953.0 Q2376.8,965.0 2383.8,953.0 Q2390.8,965.0 2397.8,953.0 Q2404.8,965.0 2411.8,953.0 Q2418.8,965.0 2425.8,953.0 Q2432.8,965.0 2439.8,953.0 Q2443.8,965.0 2447.7,953.0" stroke="#ff1a1a" stroke-width="2.8" fill="none"/><path d="M2461.0,953.0 Q2468.0,965.0 2475.0,953.0 Q2482.0,965.0 2489.0,953.0 Q2496.0,965.0 2503.0,953.0 Q2510.0,965.0 2517.0,953.0 Q2524.0,965.0 2531.0,953.0 Q2538.0,965.0 2545.0,953.0 Q2552.0,965.0 2559.0,953.0 Q2566.0,965.0 2573.0,953.0 Q2580.0,965.0 2587.0,953.0 Q2594.0,965.0 2601.0,953.0 Q2608.0,965.0 2615.0,953.0 Q2622.0,965.0 2629.0,953.0 Q2636.0,965.0 2643.0,953.0 Q2650.0,965.0 2657.0,953.0 Q2664.0,965.0 2671.0,953.0 Q2678.0,965.0 2685.0,953.0 Q2692.0,965.0 2699.0,953.0 Q2703.1,965.0 2707.2,953.0" stroke="#ff1a1a" stroke-width="2.8" fill="none"/><path d="M2720.4,953.0 Q2727.4,965.0 2734.4,953.0 Q2741.4,965.0 2748.4,953.0 Q2755.4,965.0 2762.4,953.0 Q2769.4,965.0 2776.4,953.0 Q2783.4,965.0 2790.4,953.0 Q2797.4,965.0 2804.4,953.0 Q2811.4,965.0 2818.4,953.0 Q2825.4,965.0 2832.4,953.0 Q2839.4,965.0 2846.4,953.0 Q2853.4,965.0 2860.4,953.0 Q2867.4,965.0 2874.4,953.0 Q2881.4,965.0 2888.4,953.0 Q2895.4,965.0 2902.4,953.0 Q2909.4,965.0 2916.4,953.0 Q2923.4,965.0 2930.4,953.0" stroke="#ff1a1a" stroke-width="2.8" fill="none"/><path d="M2945.5,953.0 Q2952.5,965.0 2959.5,953.0 Q2966.5,965.0 2973.5,953.0 Q2980.5,965.0 2987.5,953.0 Q2994.5,965.0 3001.5,953.0 Q3008.5,965.0 3015.5,953.0 Q3017.6,965.0 3019.7,953.0" stroke="#ff1a1a" stroke-width="2.8" fill="none"/><path d="M3032.9,953.0 Q3039.9,965.0 3046.9,953.0 Q3053.9,965.0 3060.9,953.0 Q3067.9,965.0 3074.9,953.0 Q3081.9,965.0 3088.9,953.0 Q3095.9,965.0 3102.9,953.0 Q3109.9,965.0 3116.9,953.0 Q3123.9,965.0 3130.9,953.0 Q3137.9,965.0 3144.9,953.0 Q3151.9,965.0 3158.9,953.0 Q3165.9,965.0 3172.9,953.0 Q3179.9,965.0 3186.9,953.0 Q3193.9,965.0 3200.9,953.0 Q3205.6,965.0 3210.3,953.0" stroke="#ff1a1a" stroke-width="2.8" fill="none"/><path d="M3223.6,953.0 Q3230.6,965.0 3237.6,953.0 Q3244.6,965.0 3251.6,953.0 Q3258.6,965.0 3265.6,953.0 Q3272.6,965.0 3279.6,953.0 Q3286.6,965.0 3293.6,953.0 Q3300.6,965.0 3307.6,953.0 Q3314.6,965.0 3321.6,953.0 Q3328.6,965.0 3335.6,953.0 Q3342.6,965.0 3349.6,953.0 Q3356.6,965.0 3363.6,953.0 Q3370.6,965.0 3377.6,953.0 Q3384.6,965.0 3391.6,953.0 Q3396.3,965.0 3401.0,953.0" stroke="#ff1a1a" stroke-width="2.8" fill="none"/><path d="M3477.8,953.0 Q3484.8,965.0 3491.8,953.0 Q3498.8,965.0 3505.8,953.0 Q3512.8,965.0 3519.8,953.0 Q3526.8,965.0 3533.8,953.0 Q3540.8,965.0 3547.8,953.0 Q3554.8,965.0 3561.8,953.0 Q3568.8,965.0 3575.8,953.0 Q3582.8,965.0 3589.8,953.0 Q3596.8,965.0 3603.8,953.0 Q3610.8,965.0 3617.8,953.0" stroke="#ff1a1a" stroke-width="2.8" fill="none"/><path d="M3631.4,953.0 Q3638.4,965.0 3645.4,953.0 Q3652.4,965.0 3659.4,953.0 Q3666.4,965.0 3673.4,953.0 Q3680.4,965.0 3687.4,953.0 Q3694.4,965.0 3701.4,953.0 Q3708.4,965.0 3715.4,953.0 Q3722.4,965.0 3729.4,953.0" stroke="#ff1a1a" stroke-width="2.8" fill="none"/><path d="M2036.0,1020.0 Q2043.0,1032.0 2050.0,1020.0 Q2057.0,1032.0 2064.0,1020.0 Q2071.0,1032.0 2078.0,1020.0 Q2085.0,1032.0 2092.0,1020.0 Q2099.0,1032.0 2106.0,1020.0 Q2113.0,1032.0 2120.0,1020.0 Q2127.0,1032.0 2134.0,1020.0 Q2141.0,1032.0 2148.0,1020.0" stroke="#ff1a1a" stroke-width="2.8" fill="none"/><path d="M2162.9,1020.0 Q2169.9,1032.0 2176.9,1020.0 Q2183.9,1032.0 2190.9,1020.0 Q2197.9,1032.0 2204.9,1020.0 Q2211.9,1032.0 2218.9,1020.0 Q2225.9,1032.0 2232.9,1020.0 Q2239.9,1032.0 2246.9,1020.0 Q2249.1,1032.0 2251.3,1020.0" stroke="#ff1a1a" stroke-width="2.8" fill="none"/><path d="M2264.3,1020.0 Q2271.3,1032.0 2278.3,1020.0 Q2285.3,1032.0 2292.3,1020.0 Q2299.3,1032.0 2306.3,1020.0 Q2313.3,1032.0 2320.3,1020.0 Q2327.3,1032.0 2334.3,1020.0 Q2341.3,1032.0 2348.3,1020.0 Q2355.3,1032.0 2362.3,1020.0 Q2369.3,1032.0 2376.3,1020.0 Q2383.3,1032.0 2390.3,1020.0 Q2397.3,1032.0 2404.3,1020.0 Q2411.3,1032.0 2418.3,1020.0 Q2425.3,1032.0 2432.3,1020.0 Q2438.1,1032.0 2443.9,1020.0" stroke="#ff1a1a" stroke-width="2.8" fill="none"/><path d="M2509.0,1020.0 Q2516.0,1032.0 2523.0,1020.0 Q2530.0,1032.0 2537.0,1020.0 Q2541.2,1032.0 2545.4,1020.0" stroke="#ff1a1a" stroke-width="2.8" fill="none"/><path d="M2558.4,1020.0 Q2565.4,1032.0 2572.4,1020.0 Q2579.4,1032.0 2586.4,1020.0 Q2593.4,1032.0 2600.4,1020.0 Q2607.4,1032.0 2614.4,1020.0 Q2621.4,1032.0 2628.4,1020.0 Q2635.4,1032.0 2642.4,1020.0 Q2649.4,1032.0 2656.4,1020.0 Q2663.4,1032.0 2670.4,1020.0 Q2677.4,1032.0 2684.4,1020.0 Q2690.4,1032.0 2696.3,1020.0" stroke="#ff1a1a" stroke-width="2.8" fill="none"/><path d="M2709.3,1020.0 Q2716.3,1032.0 2723.3,1020.0 Q2730.3,1032.0 2737.3,1020.0 Q2744.3,1032.0 2751.3,1020.0 Q2755.0,1032.0 2758.7,1020.0" stroke="#ff1a1a" stroke-width="2.8" fill="none"/><path d="M2771.7,1020.0 Q2778.7,1032.0 2785.7,1020.0 Q2792.7,1032.0 2799.7,1020.0 Q2806.7,1032.0 2813.7,1020.0 Q2820.7,1032.0 2827.7,1020.0 Q2834.7,1032.0 2841.7,1020.0 Q2848.7,1032.0 2855.7,1020.0 Q2862.7,1032.0 2869.7,1020.0 Q2876.7,1032.0 2883.7,1020.0 Q2890.7,1032.0 2897.7,1020.0 Q2904.7,1032.0 2911.7,1020.0 Q2918.7,1032.0 2925.7,1020.0" stroke="#ff1a1a" stroke-width="2.8" fill="none"/><path d="M2940.8,1020.0 Q2947.8,1032.0 2954.8,1020.0 Q2961.8,1032.0 2968.8,1020.0 Q2975.8,1032.0 2982.8,1020.0 Q2989.8,1032.0 2996.8,1020.0 Q3003.8,1032.0 3010.8,1020.0 Q3017.8,1032.0 3024.8,1020.0 Q3031.8,1032.0 3038.8,1020.0 Q3044.5,1032.0 3050.1,1020.0" stroke="#ff1a1a" stroke-width="2.8" fill="none"/><path d="M3063.1,1020.0 Q3070.1,1032.0 3077.1,1020.0 Q3084.1,1032.0 3091.1,1020.0 Q3098.1,1032.0 3105.1,1020.0 Q3112.1,1032.0 3119.1,1020.0 Q3126.1,1032.0 3133.1,1020.0 Q3140.1,1032.0 3147.1,1020.0" stroke="#ff1a1a" stroke-width="2.8" fill="none"/><path d="M3162.0,1020.0 Q3169.0,1032.0 3176.0,1020.0 Q3183.0,1032.0 3190.0,1020.0 Q3197.0,1032.0 3204.0,1020.0 Q3211.0,1032.0 3218.0,1020.0 Q3225.0,1032.0 3232.0,1020.0 Q3239.0,1032.0 3246.0,1020.0 Q3253.0,1032.0 3260.0,1020.0 Q3267.0,1032.0 3274.0,1020.0 Q3281.0,1032.0 3288.0,1020.0 Q3295.0,1032.0 3302.0,1020.0 Q3309.0,1032.0 3316.0,1020.0 Q3323.0,1032.0 3330.0,1020.0 Q3337.0,1032.0 3344.0,1020.0 Q3349.3,1032.0 3354.5,1020.0" stroke="#ff1a1a" stroke-width="2.8" fill="none"/><path d="M3543.6,1020.0 Q3550.6,1032.0 3557.6,1020.0 Q3564.6,1032.0 3571.6,1020.0 Q3578.6,1032.0 3585.6,1020.0 Q3592.6,1032.0 3599.6,1020.0 Q3602.9,1032.0 3606.1,1020.0" stroke="#ff1a1a" stroke-width="2.8" fill="none"/><path d="M3619.1,1020.0 Q3626.1,1032.0 3633.1,1020.0 Q3640.1,1032.0 3647.1,1020.0 Q3654.1,1032.0 3661.1,1020.0 Q3666.1,1032.0 3671.2,1020.0" stroke="#ff1a1a" stroke-width="2.8" fill="none"/><path d="M3684.2,1020.0 Q3691.2,1032.0 3698.2,1020.0 Q3705.2,1032.0 3712.2,1020.0 Q3719.2,1032.0 3726.2,1020.0 Q3733.2,1032.0 3740.2,1020.0 Q3747.2,1032.0 3754.2,1020.0 Q3761.2,1032.0 3768.2,1020.0 Q3775.2,1032.0 3782.2,1020.0 Q3789.2,1032.0 3796.2,1020.0 Q3803.2,1032.0 3810.2,1020.0 Q3817.2,1032.0 3824.2,1020.0 Q3831.2,1032.0 3838.2,1020.0" stroke="#ff1a1a" stroke-width="2.8" fill="none"/><path d="M2036.0,1087.5 Q2043.0,1099.5 2050.0,1087.5 Q2056.8,1099.5 2063.6,1087.5" stroke="#ff1a1a" stroke-width="2.8" fill="none"/><path d="M2076.7,1087.5 Q2083.7,1099.5 2090.7,1087.5 Q2097.7,1099.5 2104.7,1087.5 Q2111.7,1099.5 2118.7,1087.5 Q2125.7,1099.5 2132.7,1087.5 Q2139.7,1099.5 2146.7,1087.5 Q2153.7,1099.5 2160.7,1087.5 Q2166.0,1099.5 2171.4,1087.5" stroke="#ff1a1a" stroke-width="2.8" fill="none"/><path d="M2184.5,1087.5 Q2191.5,1099.5 2198.5,1087.5 Q2205.5,1099.5 2212.5,1087.5 Q2219.5,1099.5 2226.5,1087.5 Q2233.5,1099.5 2240.5,1087.5 Q2247.5,1099.5 2254.5,1087.5 Q2261.5,1099.5 2268.5,1087.5 Q2275.5,1099.5 2282.5,1087.5 Q2289.5,1099.5 2296.5,1087.5 Q2303.5,1099.5 2310.5,1087.5 Q2317.5,1099.5 2324.5,1087.5 Q2331.5,1099.5 2338.5,1087.5" stroke="#ff1a1a" stroke-width="2.8" fill="none"/><path d="M2355.3,1087.5 Q2362.3,1099.5 2369.3,1087.5 Q2376.3,1099.5 2383.3,1087.5 Q2390.3,1099.5 2397.3,1087.5 Q2404.3,1099.5 2411.3,1087.5 Q2418.3,1099.5 2425.3,1087.5 Q2432.3,1099.5 2439.3,1087.5 Q2446.3,1099.5 2453.3,1087.5 Q2460.3,1099.5 2467.3,1087.5 Q2474.3,1099.5 2481.3,1087.5 Q2488.3,1099.5 2495.3,1087.5 Q2502.3,1099.5 2509.3,1087.5 Q2516.3,1099.5 2523.3,1087.5" stroke="#ff1a1a" stroke-width="2.8" fill="none"/><path d="M2539.3,1087.5 Q2546.3,1099.5 2553.3,1087.5 Q2560.3,1099.5 2567.3,1087.5 Q2574.3,1099.5 2581.3,1087.5 Q2588.3,1099.5 2595.3,1087.5 Q2602.3,1099.5 2609.3,1087.5 Q2616.3,1099.5 2623.3,1087.5 Q2630.3,1099.5 2637.3,1087.5 Q2644.3,1099.5 2651.3,1087.5 Q2658.3,1099.5 2665.3,1087.5 Q2672.3,1099.5 2679.3,1087.5 Q2686.3,1099.5 2693.3,1087.5 Q2700.3,1099.5 2707.3,1087.5 Q2710.1,1099.5 2712.8,1087.5" stroke="#ff1a1a" stroke-width="2.8" fill="none"/><path d="M2725.9,1087.5 Q2732.9,1099.5 2739.9,1087.5 Q2746.9,1099.5 2753.9,1087.5 Q2760.9,1099.5 2767.9,1087.5 Q2774.9,1099.5 2781.9,1087.5 Q2788.9,1099.5 2795.9,1087.5 Q2802.9,1099.5 2809.9,1087.5 Q2816.9,1099.5 2823.9,1087.5 Q2830.9,1099.5 2837.9,1087.5 Q2844.9,1099.5 2851.9,1087.5 Q2858.9,1099.5 2865.9,1087.5 Q2870.8,1099.5 2875.7,1087.5" stroke="#ff1a1a" stroke-width="2.8" fill="none"/><path d="M2888.9,1087.5 Q2895.9,1099.5 2902.9,1087.5 Q2909.9,1099.5 2916.9,1087.5 Q2923.9,1099.5 2930.9,1087.5 Q2937.9,1099.5 2944.9,1087.5 Q2951.9,1099.5 2958.9,1087.5 Q2965.9,1099.5 2972.9,1087.5 Q2979.9,1099.5 2986.9,1087.5 Q2993.1,1099.5 2999.3,1087.5" stroke="#ff1a1a" stroke-width="2.8" fill="none"/><path d="M3012.4,1087.5 Q3019.4,1099.5 3026.4,1087.5 Q3033.4,1099.5 3040.4,1087.5 Q3047.4,1099.5 3054.4,1087.5 Q3061.4,1099.5 3068.4,1087.5 Q3075.4,1099.5 3082.4,1087.5 Q3085.5,1099.5 3088.7,1087.5" stroke="#ff1a1a" stroke-width="2.8" fill="none"/><path d="M3101.8,1087.5 Q3108.8,1099.5 3115.8,1087.5 Q3122.8,1099.5 3129.8,1087.5 Q3136.8,1099.5 3143.8,1087.5 Q3150.8,1099.5 3157.8,1087.5 Q3164.8,1099.5 3171.8,1087.5 Q3178.8,1099.5 3185.8,1087.5 Q3192.8,1099.5 3199.8,1087.5 Q3206.8,1099.5 3213.8,1087.5 Q3220.8,1099.5 3227.8,1087.5" stroke="#ff1a1a" stroke-width="2.8" fill="none"/><path d="M3243.7,1087.5 Q3250.7,1099.5 3257.7,1087.5 Q3264.7,1099.5 3271.7,1087.5 Q3278.7,1099.5 3285.7,1087.5 Q3292.7,1099.5 3299.7,1087.5 Q3306.7,1099.5 3313.7,1087.5 Q3320.7,1099.5 3327.7,1087.5 Q3334.7,1099.5 3341.7,1087.5 Q3348.7,1099.5 3355.7,1087.5 Q3362.7,1099.5 3369.7,1087.5 Q3376.7,1099.5 3383.7,1087.5 Q3390.7,1099.5 3397.7,1087.5 Q3404.7,1099.5 3411.7,1087.5 Q3418.7,1099.5 3425.7,1087.5 Q3432.7,1099.5 3439.7,1087.5 Q3445.6,1099.5 3451.4,1087.5" stroke="#ff1a1a" stroke-width="2.8" fill="none"/><path d="M3464.5,1087.5 Q3471.5,1099.5 3478.5,1087.5 Q3485.5,1099.5 3492.5,1087.5 Q3499.5,1099.5 3506.5,1087.5 Q3513.5,1099.5 3520.5,1087.5 Q3527.5,1099.5 3534.5,1087.5 Q3541.5,1099.5 3548.5,1087.5 Q3555.5,1099.5 3562.5,1087.5 Q3569.5,1099.5 3576.5,1087.5 Q3583.5,1099.5 3590.5,1087.5 Q3597.5,1099.5 3604.5,1087.5 Q3611.5,1099.5 3618.5,1087.5 Q3625.5,1099.5 3632.5,1087.5 Q3637.9,1099.5 3643.3,1087.5" stroke="#ff1a1a" stroke-width="2.8" fill="none"/><path d="M3656.5,1087.5 Q3663.5,1099.5 3670.5,1087.5 Q3677.5,1099.5 3684.5,1087.5 Q3691.5,1099.5 3698.5,1087.5 Q3705.5,1099.5 3712.5,1087.5 Q3719.5,1099.5 3726.5,1087.5 Q3733.5,1099.5 3740.5,1087.5 Q3747.5,1099.5 3754.5,1087.5 Q3761.5,1099.5 3768.5,1087.5 Q3775.5,1099.5 3782.5,1087.5 Q3786.5,1099.5 3790.5,1087.5" stroke="#ff1a1a" stroke-width="2.8" fill="none"/><path d="M2036.0,1157.0 Q2043.0,1169.0 2050.0,1157.0 Q2057.0,1169.0 2064.0,1157.0 Q2071.0,1169.0 2078.0,1157.0 Q2082.9,1169.0 2087.8,1157.0" stroke="#ff1a1a" stroke-width="2.8" fill="none"/><path d="M2101.0,1157.0 Q2108.0,1169.0 2115.0,1157.0 Q2122.0,1169.0 2129.0,1157.0 Q2136.0,1169.0 2143.0,1157.0 Q2150.0,1169.0 2157.0,1157.0 Q2164.0,1169.0 2171.0,1157.0 Q2178.0,1169.0 2185.0,1157.0 Q2192.0,1169.0 2199.0,1157.0 Q2206.0,1169.0 2213.0,1157.0 Q2220.0,1169.0 2227.0,1157.0 Q2234.0,1169.0 2241.0,1157.0 Q2248.0,1169.0 2255.0,1157.0 Q2262.0,1169.0 2269.0,1157.0 Q2276.0,1169.0 2283.0,1157.0 Q2290.0,1169.0 2297.0,1157.0 Q2304.0,1169.0 2311.0,1157.0 Q2318.0,1169.0 2325.0,1157.0 Q2329.2,1169.0 2333.3,1157.0" stroke="#ff1a1a" stroke-width="2.8" fill="none"/><path d="M2346.5,1157.0 Q2353.5,1169.0 2360.5,1157.0 Q2367.5,1169.0 2374.5,1157.0 Q2381.5,1169.0 2388.5,1157.0 Q2395.5,1169.0 2402.5,1157.0 Q2409.5,1169.0 2416.5,1157.0 Q2423.5,1169.0 2430.5,1157.0 Q2437.5,1169.0 2444.5,1157.0 Q2451.5,1169.0 2458.5,1157.0 Q2465.5,1169.0 2472.5,1157.0 Q2476.9,1169.0 2481.2,1157.0" stroke="#ff1a1a" stroke-width="2.8" fill="none"/><path d="M2652.8,1157.0 Q2659.8,1169.0 2666.8,1157.0 Q2673.8,1169.0 2680.8,1157.0 Q2687.8,1169.0 2694.8,1157.0 Q2701.8,1169.0 2708.8,1157.0 Q2715.8,1169.0 2722.8,1157.0 Q2729.8,1169.0 2736.8,1157.0 Q2743.8,1169.0 2750.8,1157.0 Q2753.3,1169.0 2755.8,1157.0" stroke="#ff1a1a" stroke-width="2.8" fill="none"/><path d="M2769.0,1157.0 Q2776.0,1169.0 2783.0,1157.0 Q2790.0,1169.0 2797.0,1157.0 Q2804.0,1169.0 2811.0,1157.0 Q2818.0,1169.0 2825.0,1157.0 Q2832.0,1169.0 2839.0,1157.0 Q2846.0,1169.0 2853.0,1157.0 Q2860.0,1169.0 2867.0,1157.0 Q2874.0,1169.0 2881.0,1157.0 Q2888.0,1169.0 2895.0,1157.0 Q2902.0,1169.0 2909.0,1157.0 Q2916.0,1169.0 2923.0,1157.0 Q2930.0,1169.0 2937.0,1157.0 Q2944.0,1169.0 2951.0,1157.0" stroke="#ff1a1a" stroke-width="2.8" fill="none"/><path d="M2967.0,1157.0 Q2974.0,1169.0 2981.0,1157.0 Q2988.0,1169.0 2995.0,1157.0 Q3002.0,1169.0 3009.0,1157.0 Q3011.7,1169.0 3014.5,1157.0" stroke="#ff1a1a" stroke-width="2.8" fill="none"/><path d="M3027.6,1157.0 Q3034.6,1169.0 3041.6,1157.0 Q3048.6,1169.0 3055.6,1157.0 Q3062.6,1169.0 3069.6,1157.0 Q3076.6,1169.0 3083.6,1157.0 Q3090.6,1169.0 3097.6,1157.0 Q3104.6,1169.0 3111.6,1157.0 Q3118.6,1169.0 3125.6,1157.0 Q3132.6,1169.0 3139.6,1157.0 Q3146.6,1169.0 3153.6,1157.0 Q3160.6,1169.0 3167.6,1157.0 Q3174.6,1169.0 3181.6,1157.0 Q3188.6,1169.0 3195.6,1157.0 Q3202.6,1169.0 3209.6,1157.0 Q3212.4,1169.0 3215.1,1157.0" stroke="#ff1a1a" stroke-width="2.8" fill="none"/><path d="M3228.3,1157.0 Q3235.3,1169.0 3242.3,1157.0 Q3249.3,1169.0 3256.3,1157.0 Q3263.3,1169.0 3270.3,1157.0 Q3277.3,1169.0 3284.3,1157.0 Q3291.3,1169.0 3298.3,1157.0 Q3305.3,1169.0 3312.3,1157.0 Q3319.3,1169.0 3326.3,1157.0 Q3333.3,1169.0 3340.3,1157.0 Q3347.3,1169.0 3354.3,1157.0 Q3361.3,1169.0 3368.3,1157.0 Q3375.3,1169.0 3382.3,1157.0 Q3384.5,1169.0 3386.6,1157.0" stroke="#ff1a1a" stroke-width="2.8" fill="none"/><path d="M3399.8,1157.0 Q3406.8,1169.0 3413.8,1157.0 Q3420.8,1169.0 3427.8,1157.0 Q3434.8,1169.0 3441.8,1157.0 Q3448.8,1169.0 3455.8,1157.0 Q3458.2,1169.0 3460.6,1157.0" stroke="#ff1a1a" stroke-width="2.8" fill="none"/><path d="M3473.7,1157.0 Q3480.7,1169.0 3487.7,1157.0 Q3494.7,1169.0 3501.7,1157.0 Q3508.7,1169.0 3515.7,1157.0 Q3522.7,1169.0 3529.7,1157.0 Q3536.7,1169.0 3543.7,1157.0 Q3550.7,1169.0 3557.7,1157.0 Q3564.7,1169.0 3571.7,1157.0 Q3576.9,1169.0 3582.0,1157.0" stroke="#ff1a1a" stroke-width="2.8" fill="none"/><path d="M3595.2,1157.0 Q3602.2,1169.0 3609.2,1157.0 Q3616.2,1169.0 3623.2,1157.0 Q3630.2,1169.0 3637.2,1157.0 Q3644.2,1169.0 3651.2,1157.0 Q3658.2,1169.0 3665.2,1157.0 Q3672.2,1169.0 3679.2,1157.0 Q3686.2,1169.0 3693.2,1157.0 Q3700.2,1169.0 3707.2,1157.0 Q3714.2,1169.0 3721.2,1157.0 Q3724.2,1169.0 3727.2,1157.0" stroke="#ff1a1a" stroke-width="2.8" fill="none"/><path d="M2036.0,1224.5 Q2043.0,1236.5 2050.0,1224.5 Q2057.0,1236.5 2064.0,1224.5 Q2071.0,1236.5 2078.0,1224.5 Q2085.0,1236.5 2092.0,1224.5 Q2099.0,1236.5 2106.0,1224.5 Q2113.0,1236.5 2120.0,1224.5 Q2127.0,1236.5 2134.0,1224.5 Q2141.0,1236.5 2148.0,1224.5 Q2155.0,1236.5 2162.0,1224.5 Q2169.0,1236.5 2176.0,1224.5 Q2183.0,1236.5 2190.0,1224.5" stroke="#ff1a1a" stroke-width="2.8" fill="none"/><path d="M2276.3,1224.5 Q2283.3,1236.5 2290.3,1224.5 Q2297.3,1236.5 2304.3,1224.5 Q2311.3,1236.5 2318.3,1224.5 Q2325.3,1236.5 2332.3,1224.5 Q2339.3,1236.5 2346.3,1224.5 Q2353.3,1236.5 2360.3,1224.5 Q2367.3,1236.5 2374.3,1224.5 Q2377.3,1236.5 2380.4,1224.5" stroke="#ff1a1a" stroke-width="2.8" fill="none"/><path d="M2393.7,1224.5 Q2400.7,1236.5 2407.7,1224.5 Q2414.7,1236.5 2421.7,1224.5 Q2428.7,1236.5 2435.7,1224.5 Q2442.7,1236.5 2449.7,1224.5 Q2456.7,1236.5 2463.7,1224.5 Q2470.7,1236.5 2477.7,1224.5 Q2484.7,1236.5 2491.7,1224.5 Q2498.7,1236.5 2505.7,1224.5 Q2512.7,1236.5 2519.7,1224.5 Q2526.7,1236.5 2533.7,1224.5 Q2540.7,1236.5 2547.7,1224.5 Q2554.7,1236.5 2561.7,1224.5 Q2565.9,1236.5 2570.0,1224.5" stroke="#ff1a1a" stroke-width="2.8" fill="none"/><path d="M2666.1,1224.5 Q2673.1,1236.5 2680.1,1224.5 Q2687.1,1236.5 2694.1,1224.5 Q2701.1,1236.5 2708.1,1224.5 Q2715.1,1236.5 2722.1,1224.5 Q2729.1,1236.5 2736.1,1224.5 Q2743.1,1236.5 2750.1,1224.5 Q2757.1,1236.5 2764.1,1224.5 Q2771.1,1236.5 2778.1,1224.5 Q2785.1,1236.5 2792.1,1224.5 Q2799.1,1236.5 2806.1,1224.5 Q2813.1,1236.5 2820.1,1224.5 Q2827.1,1236.5 2834.1,1224.5" stroke="#ff1a1a" stroke-width="2.8" fill="none"/><path d="M2847.6,1224.5 Q2854.6,1236.5 2861.6,1224.5 Q2868.6,1236.5 2875.6,1224.5 Q2882.6,1236.5 2889.6,1224.5 Q2896.6,1236.5 2903.6,1224.5 Q2910.6,1236.5 2917.6,1224.5 Q2924.6,1236.5 2931.6,1224.5 Q2938.6,1236.5 2945.6,1224.5 Q2952.6,1236.5 2959.6,1224.5 Q2966.6,1236.5 2973.6,1224.5 Q2977.4,1236.5 2981.1,1224.5" stroke="#ff1a1a" stroke-width="2.8" fill="none"/><path d="M2994.5,1224.5 Q3001.5,1236.5 3008.5,1224.5 Q3015.5,1236.5 3022.5,1224.5 Q3029.5,1236.5 3036.5,1224.5 Q3043.5,1236.5 3050.5,1224.5 Q3057.5,1236.5 3064.5,1224.5 Q3071.5,1236.5 3078.5,1224.5 Q3085.5,1236.5 3092.5,1224.5 Q3099.5,1236.5 3106.5,1224.5 Q3113.5,1236.5 3120.5,1224.5 Q3127.5,1236.5 3134.5,1224.5 Q3141.5,1236.5 3148.5,1224.5 Q3155.5,1236.5 3162.5,1224.5 Q3167.9,1236.5 3173.4,1224.5" stroke="#ff1a1a" stroke-width="2.8" fill="none"/><path d="M3186.7,1224.5 Q3193.7,1236.5 3200.7,1224.5 Q3207.7,1236.5 3214.7,1224.5 Q3221.7,1236.5 3228.7,1224.5 Q3235.7,1236.5 3242.7,1224.5 Q3249.7,1236.5 3256.7,1224.5 Q3263.7,1236.5 3270.7,1224.5 Q3277.7,1236.5 3284.7,1224.5 Q3291.7,1236.5 3298.7,1224.5 Q3305.7,1236.5 3312.7,1224.5 Q3319.7,1236.5 3326.7,1224.5 Q3333.7,1236.5 3340.7,1224.5 Q3347.7,1236.5 3354.7,1224.5 Q3361.7,1236.5 3368.7,1224.5 Q3375.7,1236.5 3382.7,1224.5 Q3389.7,1236.5 3396.7,1224.5 Q3403.7,1236.5 3410.7,1224.5 Q3417.7,1236.5 3424.7,1224.5 Q3429.9,1236.5 3435.0,1224.5" stroke="#ff1a1a" stroke-width="2.8" fill="none"/><path d="M2036.0,1414.5 Q2043.0,1426.5 2050.0,1414.5 Q2057.0,1426.5 2064.0,1414.5 Q2071.0,1426.5 2078.0,1414.5 Q2085.0,1426.5 2092.0,1414.5 Q2099.0,1426.5 2106.0,1414.5 Q2113.0,1426.5 2120.0,1414.5 Q2127.0,1426.5 2134.0,1414.5 Q2141.0,1426.5 2148.0,1414.5" stroke="#ff1a1a" stroke-width="2.8" fill="none"/><path d="M2161.8,1414.5 Q2168.8,1426.5 2175.8,1414.5 Q2182.8,1426.5 2189.8,1414.5 Q2196.8,1426.5 2203.8,1414.5 Q2210.8,1426.5 2217.8,1414.5 Q2224.8,1426.5 2231.8,1414.5 Q2238.8,1426.5 2245.8,1414.5 Q2252.8,1426.5 2259.8,1414.5 Q2263.8,1426.5 2267.7,1414.5" stroke="#ff1a1a" stroke-width="2.8" fill="none"/><path d="M2281.0,1414.5 Q2288.0,1426.5 2295.0,1414.5 Q2302.0,1426.5 2309.0,1414.5 Q2316.0,1426.5 2323.0,1414.5 Q2325.8,1426.5 2328.6,1414.5" stroke="#ff1a1a" stroke-width="2.8" fill="none"/><path d="M2341.8,1414.5 Q2348.8,1426.5 2355.8,1414.5 Q2362.8,1426.5 2369.8,1414.5 Q2376.8,1426.5 2383.8,1414.5 Q2390.8,1426.5 2397.8,1414.5 Q2404.8,1426.5 2411.8,1414.5 Q2418.8,1426.5 2425.8,1414.5 Q2432.8,1426.5 2439.8,1414.5 Q2443.8,1426.5 2447.7,1414.5" stroke="#ff1a1a" stroke-width="2.8" fill="none"/><path d="M2461.0,1414.5 Q2468.0,1426.5 2475.0,1414.5 Q2482.0,1426.5 2489.0,1414.5 Q2496.0,1426.5 2503.0,1414.5 Q2510.0,1426.5 2517.0,1414.5 Q2524.0,1426.5 2531.0,1414.5 Q2538.0,1426.5 2545.0,1414.5 Q2552.0,1426.5 2559.0,1414.5 Q2566.0,1426.5 2573.0,1414.5 Q2580.0,1426.5 2587.0,1414.5 Q2594.0,1426.5 2601.0,1414.5 Q2608.0,1426.5 2615.0,1414.5 Q2622.0,1426.5 2629.0,1414.5 Q2636.0,1426.5 2643.0,1414.5 Q2650.0,1426.5 2657.0,1414.5 Q2664.0,1426.5 2671.0,1414.5 Q2678.0,1426.5 2685.0,1414.5 Q2692.0,1426.5 2699.0,1414.5 Q2703.1,1426.5 2707.2,1414.5" stroke="#ff1a1a" stroke-width="2.8" fill="none"/><path d="M2720.4,1414.5 Q2727.4,1426.5 2734.4,1414.5 Q2741.4,1426.5 2748.4,1414.5 Q2755.4,1426.5 2762.4,1414.5 Q2769.4,1426.5 2776.4,1414.5 Q2783.4,1426.5 2790.4,1414.5 Q2797.4,1426.5 2804.4,1414.5 Q2811.4,1426.5 2818.4,1414.5 Q2825.4,1426.5 2832.4,1414.5 Q2839.4,1426.5 2846.4,1414.5 Q2853.4,1426.5 2860.4,1414.5 Q2867.4,1426.5 2874.4,1414.5 Q2881.4,1426.5 2888.4,1414.5 Q2895.4,1426.5 2902.4,1414.5 Q2909.4,1426.5 2916.4,1414.5 Q2923.4,1426.5 2930.4,1414.5" stroke="#ff1a1a" stroke-width="2.8" fill="none"/><path d="M2945.5,1414.5 Q2952.5,1426.5 2959.5,1414.5 Q2966.5,1426.5 2973.5,1414.5 Q2980.5,1426.5 2987.5,1414.5 Q2994.5,1426.5 3001.5,1414.5 Q3008.5,1426.5 3015.5,1414.5 Q3017.6,1426.5 3019.7,1414.5" stroke="#ff1a1a" stroke-width="2.8" fill="none"/><path d="M3032.9,1414.5 Q3039.9,1426.5 3046.9,1414.5 Q3053.9,1426.5 3060.9,1414.5 Q3067.9,1426.5 3074.9,1414.5 Q3081.9,1426.5 3088.9,1414.5 Q3095.9,1426.5 3102.9,1414.5 Q3109.9,1426.5 3116.9,1414.5 Q3123.9,1426.5 3130.9,1414.5 Q3137.9,1426.5 3144.9,1414.5 Q3151.9,1426.5 3158.9,1414.5 Q3165.9,1426.5 3172.9,1414.5 Q3179.9,1426.5 3186.9,1414.5 Q3193.9,1426.5 3200.9,1414.5 Q3205.6,1426.5 3210.3,1414.5" stroke="#ff1a1a" stroke-width="2.8" fill="none"/><path d="M3223.6,1414.5 Q3230.6,1426.5 3237.6,1414.5 Q3244.6,1426.5 3251.6,1414.5 Q3258.6,1426.5 3265.6,1414.5 Q3272.6,1426.5 3279.6,1414.5 Q3286.6,1426.5 3293.6,1414.5 Q3300.6,1426.5 3307.6,1414.5 Q3314.6,1426.5 3321.6,1414.5 Q3328.6,1426.5 3335.6,1414.5 Q3342.6,1426.5 3349.6,1414.5 Q3356.6,1426.5 3363.6,1414.5 Q3370.6,1426.5 3377.6,1414.5 Q3384.6,1426.5 3391.6,1414.5 Q3396.3,1426.5 3401.0,1414.5" stroke="#ff1a1a" stroke-width="2.8" fill="none"/><path d="M3477.8,1414.5 Q3484.8,1426.5 3491.8,1414.5 Q3498.8,1426.5 3505.8,1414.5 Q3512.8,1426.5 3519.8,1414.5 Q3526.8,1426.5 3533.8,1414.5 Q3540.8,1426.5 3547.8,1414.5 Q3554.8,1426.5 3561.8,1414.5 Q3568.8,1426.5 3575.8,1414.5 Q3582.8,1426.5 3589.8,1414.5 Q3596.8,1426.5 3603.8,1414.5 Q3610.8,1426.5 3617.8,1414.5" stroke="#ff1a1a" stroke-width="2.8" fill="none"/><path d="M3631.4,1414.5 Q3638.4,1426.5 3645.4,1414.5 Q3652.4,1426.5 3659.4,1414.5 Q3666.4,1426.5 3673.4,1414.5 Q3680.4,1426.5 3687.4,1414.5 Q3694.4,1426.5 3701.4,1414.5 Q3708.4,1426.5 3715.4,1414.5 Q3722.4,1426.5 3729.4,1414.5" stroke="#ff1a1a" stroke-width="2.8" fill="none"/><path d="M2036.0,1481.5 Q2043.0,1493.5 2050.0,1481.5 Q2057.0,1493.5 2064.0,1481.5 Q2071.0,1493.5 2078.0,1481.5 Q2085.0,1493.5 2092.0,1481.5 Q2099.0,1493.5 2106.0,1481.5 Q2113.0,1493.5 2120.0,1481.5 Q2127.0,1493.5 2134.0,1481.5 Q2141.0,1493.5 2148.0,1481.5" stroke="#ff1a1a" stroke-width="2.8" fill="none"/><path d="M2162.9,1481.5 Q2169.9,1493.5 2176.9,1481.5 Q2183.9,1493.5 2190.9,1481.5 Q2197.9,1493.5 2204.9,1481.5 Q2211.9,1493.5 2218.9,1481.5 Q2225.9,1493.5 2232.9,1481.5 Q2239.9,1493.5 2246.9,1481.5 Q2249.1,1493.5 2251.3,1481.5" stroke="#ff1a1a" stroke-width="2.8" fill="none"/><path d="M2264.3,1481.5 Q2271.3,1493.5 2278.3,1481.5 Q2285.3,1493.5 2292.3,1481.5 Q2299.3,1493.5 2306.3,1481.5 Q2313.3,1493.5 2320.3,1481.5 Q2327.3,1493.5 2334.3,1481.5 Q2341.3,1493.5 2348.3,1481.5 Q2355.3,1493.5 2362.3,1481.5 Q2369.3,1493.5 2376.3,1481.5 Q2383.3,1493.5 2390.3,1481.5 Q2397.3,1493.5 2404.3,1481.5 Q2411.3,1493.5 2418.3,1481.5 Q2425.3,1493.5 2432.3,1481.5 Q2438.1,1493.5 2443.9,1481.5" stroke="#ff1a1a" stroke-width="2.8" fill="none"/><path d="M2509.0,1481.5 Q2516.0,1493.5 2523.0,1481.5 Q2530.0,1493.5 2537.0,1481.5 Q2541.2,1493.5 2545.4,1481.5" stroke="#ff1a1a" stroke-width="2.8" fill="none"/><path d="M2558.4,1481.5 Q2565.4,1493.5 2572.4,1481.5 Q2579.4,1493.5 2586.4,1481.5 Q2593.4,1493.5 2600.4,1481.5 Q2607.4,1493.5 2614.4,1481.5 Q2621.4,1493.5 2628.4,1481.5 Q2635.4,1493.5 2642.4,1481.5 Q2649.4,1493.5 2656.4,1481.5 Q2663.4,1493.5 2670.4,1481.5 Q2677.4,1493.5 2684.4,1481.5 Q2690.4,1493.5 2696.3,1481.5" stroke="#ff1a1a" stroke-width="2.8" fill="none"/><path d="M2709.3,1481.5 Q2716.3,1493.5 2723.3,1481.5 Q2730.3,1493.5 2737.3,1481.5 Q2744.3,1493.5 2751.3,1481.5 Q2755.0,1493.5 2758.7,1481.5" stroke="#ff1a1a" stroke-width="2.8" fill="none"/><path d="M2771.7,1481.5 Q2778.7,1493.5 2785.7,1481.5 Q2792.7,1493.5 2799.7,1481.5 Q2806.7,1493.5 2813.7,1481.5 Q2820.7,1493.5 2827.7,1481.5 Q2834.7,1493.5 2841.7,1481.5 Q2848.7,1493.5 2855.7,1481.5 Q2862.7,1493.5 2869.7,1481.5 Q2876.7,1493.5 2883.7,1481.5 Q2890.7,1493.5 2897.7,1481.5 Q2904.7,1493.5 2911.7,1481.5 Q2918.7,1493.5 2925.7,1481.5" stroke="#ff1a1a" stroke-width="2.8" fill="none"/><path d="M2940.8,1481.5 Q2947.8,1493.5 2954.8,1481.5 Q2961.8,1493.5 2968.8,1481.5 Q2975.8,1493.5 2982.8,1481.5 Q2989.8,1493.5 2996.8,1481.5 Q3003.8,1493.5 3010.8,1481.5 Q3017.8,1493.5 3024.8,1481.5 Q3031.8,1493.5 3038.8,1481.5 Q3044.5,1493.5 3050.1,1481.5" stroke="#ff1a1a" stroke-width="2.8" fill="none"/><path d="M3063.1,1481.5 Q3070.1,1493.5 3077.1,1481.5 Q3084.1,1493.5 3091.1,1481.5 Q3098.1,1493.5 3105.1,1481.5 Q3112.1,1493.5 3119.1,1481.5 Q3126.1,1493.5 3133.1,1481.5 Q3140.1,1493.5 3147.1,1481.5" stroke="#ff1a1a" stroke-width="2.8" fill="none"/><path d="M3162.0,1481.5 Q3169.0,1493.5 3176.0,1481.5 Q3183.0,1493.5 3190.0,1481.5 Q3197.0,1493.5 3204.0,1481.5 Q3211.0,1493.5 3218.0,1481.5 Q3225.0,1493.5 3232.0,1481.5 Q3239.0,1493.5 3246.0,1481.5 Q3253.0,1493.5 3260.0,1481.5 Q3267.0,1493.5 3274.0,1481.5 Q3281.0,1493.5 3288.0,1481.5 Q3295.0,1493.5 3302.0,1481.5 Q3309.0,1493.5 3316.0,1481.5 Q3323.0,1493.5 3330.0,1481.5 Q3337.0,1493.5 3344.0,1481.5 Q3349.3,1493.5 3354.5,1481.5" stroke="#ff1a1a" stroke-width="2.8" fill="none"/><path d="M3543.6,1481.5 Q3550.6,1493.5 3557.6,1481.5 Q3564.6,1493.5 3571.6,1481.5 Q3578.6,1493.5 3585.6,1481.5 Q3592.6,1493.5 3599.6,1481.5 Q3602.9,1493.5 3606.1,1481.5" stroke="#ff1a1a" stroke-width="2.8" fill="none"/><path d="M3619.1,1481.5 Q3626.1,1493.5 3633.1,1481.5 Q3640.1,1493.5 3647.1,1481.5 Q3654.1,1493.5 3661.1,1481.5 Q3666.1,1493.5 3671.2,1481.5" stroke="#ff1a1a" stroke-width="2.8" fill="none"/><path d="M3684.2,1481.5 Q3691.2,1493.5 3698.2,1481.5 Q3705.2,1493.5 3712.2,1481.5 Q3719.2,1493.5 3726.2,1481.5 Q3733.2,1493.5 3740.2,1481.5 Q3747.2,1493.5 3754.2,1481.5 Q3761.2,1493.5 3768.2,1481.5 Q3775.2,1493.5 3782.2,1481.5 Q3789.2,1493.5 3796.2,1481.5 Q3803.2,1493.5 3810.2,1481.5 Q3817.2,1493.5 3824.2,1481.5 Q3831.2,1493.5 3838.2,1481.5" stroke="#ff1a1a" stroke-width="2.8" fill="none"/><path d="M2036.0,1549.0 Q2043.0,1561.0 2050.0,1549.0 Q2056.8,1561.0 2063.6,1549.0" stroke="#ff1a1a" stroke-width="2.8" fill="none"/><path d="M2076.7,1549.0 Q2083.7,1561.0 2090.7,1549.0 Q2097.7,1561.0 2104.7,1549.0 Q2111.7,1561.0 2118.7,1549.0 Q2125.7,1561.0 2132.7,1549.0 Q2139.7,1561.0 2146.7,1549.0 Q2153.7,1561.0 2160.7,1549.0 Q2166.0,1561.0 2171.4,1549.0" stroke="#ff1a1a" stroke-width="2.8" fill="none"/><path d="M2184.5,1549.0 Q2191.5,1561.0 2198.5,1549.0 Q2205.5,1561.0 2212.5,1549.0 Q2219.5,1561.0 2226.5,1549.0 Q2233.5,1561.0 2240.5,1549.0 Q2247.5,1561.0 2254.5,1549.0 Q2261.5,1561.0 2268.5,1549.0 Q2275.5,1561.0 2282.5,1549.0 Q2289.5,1561.0 2296.5,1549.0 Q2303.5,1561.0 2310.5,1549.0 Q2317.5,1561.0 2324.5,1549.0 Q2331.5,1561.0 2338.5,1549.0" stroke="#ff1a1a" stroke-width="2.8" fill="none"/><path d="M2355.3,1549.0 Q2362.3,1561.0 2369.3,1549.0 Q2376.3,1561.0 2383.3,1549.0 Q2390.3,1561.0 2397.3,1549.0 Q2404.3,1561.0 2411.3,1549.0 Q2418.3,1561.0 2425.3,1549.0 Q2432.3,1561.0 2439.3,1549.0 Q2446.3,1561.0 2453.3,1549.0 Q2460.3,1561.0 2467.3,1549.0 Q2474.3,1561.0 2481.3,1549.0 Q2488.3,1561.0 2495.3,1549.0 Q2502.3,1561.0 2509.3,1549.0 Q2516.3,1561.0 2523.3,1549.0" stroke="#ff1a1a" stroke-width="2.8" fill="none"/><path d="M2539.3,1549.0 Q2546.3,1561.0 2553.3,1549.0 Q2560.3,1561.0 2567.3,1549.0 Q2574.3,1561.0 2581.3,1549.0 Q2588.3,1561.0 2595.3,1549.0 Q2602.3,1561.0 2609.3,1549.0 Q2616.3,1561.0 2623.3,1549.0 Q2630.3,1561.0 2637.3,1549.0 Q2644.3,1561.0 2651.3,1549.0 Q2658.3,1561.0 2665.3,1549.0 Q2672.3,1561.0 2679.3,1549.0 Q2686.3,1561.0 2693.3,1549.0 Q2700.3,1561.0 2707.3,1549.0 Q2710.1,1561.0 2712.8,1549.0" stroke="#ff1a1a" stroke-width="2.8" fill="none"/><path d="M2725.9,1549.0 Q2732.9,1561.0 2739.9,1549.0 Q2746.9,1561.0 2753.9,1549.0 Q2760.9,1561.0 2767.9,1549.0 Q2774.9,1561.0 2781.9,1549.0 Q2788.9,1561.0 2795.9,1549.0 Q2802.9,1561.0 2809.9,1549.0 Q2816.9,1561.0 2823.9,1549.0 Q2830.9,1561.0 2837.9,1549.0 Q2844.9,1561.0 2851.9,1549.0 Q2858.9,1561.0 2865.9,1549.0 Q2870.8,1561.0 2875.7,1549.0" stroke="#ff1a1a" stroke-width="2.8" fill="none"/><path d="M2888.9,1549.0 Q2895.9,1561.0 2902.9,1549.0 Q2909.9,1561.0 2916.9,1549.0 Q2923.9,1561.0 2930.9,1549.0 Q2937.9,1561.0 2944.9,1549.0 Q2951.9,1561.0 2958.9,1549.0 Q2965.9,1561.0 2972.9,1549.0 Q2979.9,1561.0 2986.9,1549.0 Q2993.1,1561.0 2999.3,1549.0" stroke="#ff1a1a" stroke-width="2.8" fill="none"/><path d="M3012.4,1549.0 Q3019.4,1561.0 3026.4,1549.0 Q3033.4,1561.0 3040.4,1549.0 Q3047.4,1561.0 3054.4,1549.0 Q3061.4,1561.0 3068.4,1549.0 Q3075.4,1561.0 3082.4,1549.0 Q3085.5,1561.0 3088.7,1549.0" stroke="#ff1a1a" stroke-width="2.8" fill="none"/><path d="M3101.8,1549.0 Q3108.8,1561.0 3115.8,1549.0 Q3122.8,1561.0 3129.8,1549.0 Q3136.8,1561.0 3143.8,1549.0 Q3150.8,1561.0 3157.8,1549.0 Q3164.8,1561.0 3171.8,1549.0 Q3178.8,1561.0 3185.8,1549.0 Q3192.8,1561.0 3199.8,1549.0 Q3206.8,1561.0 3213.8,1549.0 Q3220.8,1561.0 3227.8,1549.0" stroke="#ff1a1a" stroke-width="2.8" fill="none"/><path d="M3243.7,1549.0 Q3250.7,1561.0 3257.7,1549.0 Q3264.7,1561.0 3271.7,1549.0 Q3278.7,1561.0 3285.7,1549.0 Q3292.7,1561.0 3299.7,1549.0 Q3306.7,1561.0 3313.7,1549.0 Q3320.7,1561.0 3327.7,1549.0 Q3334.7,1561.0 3341.7,1549.0 Q3348.7,1561.0 3355.7,1549.0 Q3362.7,1561.0 3369.7,1549.0 Q3376.7,1561.0 3383.7,1549.0 Q3390.7,1561.0 3397.7,1549.0 Q3404.7,1561.0 3411.7,1549.0 Q3418.7,1561.0 3425.7,1549.0 Q3432.7,1561.0 3439.7,1549.0 Q3445.6,1561.0 3451.4,1549.0" stroke="#ff1a1a" stroke-width="2.8" fill="none"/><path d="M3464.5,1549.0 Q3471.5,1561.0 3478.5,1549.0 Q3485.5,1561.0 3492.5,1549.0 Q3499.5,1561.0 3506.5,1549.0 Q3513.5,1561.0 3520.5,1549.0 Q3527.5,1561.0 3534.5,1549.0 Q3541.5,1561.0 3548.5,1549.0 Q3555.5,1561.0 3562.5,1549.0 Q3569.5,1561.0 3576.5,1549.0 Q3583.5,1561.0 3590.5,1549.0 Q3597.5,1561.0 3604.5,1549.0 Q3611.5,1561.0 3618.5,1549.0 Q3625.5,1561.0 3632.5,1549.0 Q3637.9,1561.0 3643.3,1549.0" stroke="#ff1a1a" stroke-width="2.8" fill="none"/><path d="M3656.5,1549.0 Q3663.5,1561.0 3670.5,1549.0 Q3677.5,1561.0 3684.5,1549.0 Q3691.5,1561.0 3698.5,1549.0 Q3705.5,1561.0 3712.5,1549.0 Q3719.5,1561.0 3726.5,1549.0 Q3733.5,1561.0 3740.5,1549.0 Q3747.5,1561.0 3754.5,1549.0 Q3761.5,1561.0 3768.5,1549.0 Q3775.5,1561.0 3782.5,1549.0 Q3786.5,1561.0 3790.5,1549.0" stroke="#ff1a1a" stroke-width="2.8" fill="none"/><path d="M2036.0,1618.5 Q2043.0,1630.5 2050.0,1618.5 Q2057.0,1630.5 2064.0,1618.5 Q2071.0,1630.5 2078.0,1618.5 Q2082.9,1630.5 2087.8,1618.5" stroke="#ff1a1a" stroke-width="2.8" fill="none"/><path d="M2101.0,1618.5 Q2108.0,1630.5 2115.0,1618.5 Q2122.0,1630.5 2129.0,1618.5 Q2136.0,1630.5 2143.0,1618.5 Q2150.0,1630.5 2157.0,1618.5 Q2164.0,1630.5 2171.0,1618.5 Q2178.0,1630.5 2185.0,1618.5 Q2192.0,1630.5 2199.0,1618.5 Q2206.0,1630.5 2213.0,1618.5 Q2220.0,1630.5 2227.0,1618.5 Q2234.0,1630.5 2241.0,1618.5 Q2248.0,1630.5 2255.0,1618.5 Q2262.0,1630.5 2269.0,1618.5 Q2276.0,1630.5 2283.0,1618.5 Q2290.0,1630.5 2297.0,1618.5 Q2304.0,1630.5 2311.0,1618.5 Q2318.0,1630.5 2325.0,1618.5 Q2329.2,1630.5 2333.3,1618.5" stroke="#ff1a1a" stroke-width="2.8" fill="none"/><path d="M2346.5,1618.5 Q2353.5,1630.5 2360.5,1618.5 Q2367.5,1630.5 2374.5,1618.5 Q2381.5,1630.5 2388.5,1618.5 Q2395.5,1630.5 2402.5,1618.5 Q2409.5,1630.5 2416.5,1618.5 Q2423.5,1630.5 2430.5,1618.5 Q2437.5,1630.5 2444.5,1618.5 Q2451.5,1630.5 2458.5,1618.5 Q2465.5,1630.5 2472.5,1618.5 Q2476.9,1630.5 2481.2,1618.5" stroke="#ff1a1a" stroke-width="2.8" fill="none"/><path d="M2652.8,1618.5 Q2659.8,1630.5 2666.8,1618.5 Q2673.8,1630.5 2680.8,1618.5 Q2687.8,1630.5 2694.8,1618.5 Q2701.8,1630.5 2708.8,1618.5 Q2715.8,1630.5 2722.8,1618.5 Q2729.8,1630.5 2736.8,1618.5 Q2743.8,1630.5 2750.8,1618.5 Q2753.3,1630.5 2755.8,1618.5" stroke="#ff1a1a" stroke-width="2.8" fill="none"/><path d="M2769.0,1618.5 Q2776.0,1630.5 2783.0,1618.5 Q2790.0,1630.5 2797.0,1618.5 Q2804.0,1630.5 2811.0,1618.5 Q2818.0,1630.5 2825.0,1618.5 Q2832.0,1630.5 2839.0,1618.5 Q2846.0,1630.5 2853.0,1618.5 Q2860.0,1630.5 2867.0,1618.5 Q2874.0,1630.5 2881.0,1618.5 Q2888.0,1630.5 2895.0,1618.5 Q2902.0,1630.5 2909.0,1618.5 Q2916.0,1630.5 2923.0,1618.5 Q2930.0,1630.5 2937.0,1618.5 Q2944.0,1630.5 2951.0,1618.5" stroke="#ff1a1a" stroke-width="2.8" fill="none"/><path d="M2967.0,1618.5 Q2974.0,1630.5 2981.0,1618.5 Q2988.0,1630.5 2995.0,1618.5 Q3002.0,1630.5 3009.0,1618.5 Q3011.7,1630.5 3014.5,1618.5" stroke="#ff1a1a" stroke-width="2.8" fill="none"/><path d="M3027.6,1618.5 Q3034.6,1630.5 3041.6,1618.5 Q3048.6,1630.5 3055.6,1618.5 Q3062.6,1630.5 3069.6,1618.5 Q3076.6,1630.5 3083.6,1618.5 Q3090.6,1630.5 3097.6,1618.5 Q3104.6,1630.5 3111.6,1618.5 Q3118.6,1630.5 3125.6,1618.5 Q3132.6,1630.5 3139.6,1618.5 Q3146.6,1630.5 3153.6,1618.5 Q3160.6,1630.5 3167.6,1618.5 Q3174.6,1630.5 3181.6,1618.5 Q3188.6,1630.5 3195.6,1618.5 Q3202.6,1630.5 3209.6,1618.5 Q3212.4,1630.5 3215.1,1618.5" stroke="#ff1a1a" stroke-width="2.8" fill="none"/><path d="M3228.3,1618.5 Q3235.3,1630.5 3242.3,1618.5 Q3249.3,1630.5 3256.3,1618.5 Q3263.3,1630.5 3270.3,1618.5 Q3277.3,1630.5 3284.3,1618.5 Q3291.3,1630.5 3298.3,1618.5 Q3305.3,1630.5 3312.3,1618.5 Q3319.3,1630.5 3326.3,1618.5 Q3333.3,1630.5 3340.3,1618.5 Q3347.3,1630.5 3354.3,1618.5 Q3361.3,1630.5 3368.3,1618.5 Q3375.3,1630.5 3382.3,1618.5 Q3384.5,1630.5 3386.6,1618.5" stroke="#ff1a1a" stroke-width="2.8" fill="none"/><path d="M3399.8,1618.5 Q3406.8,1630.5 3413.8,1618.5 Q3420.8,1630.5 3427.8,1618.5 Q3434.8,1630.5 3441.8,1618.5 Q3448.8,1630.5 3455.8,1618.5 Q3458.2,1630.5 3460.6,1618.5" stroke="#ff1a1a" stroke-width="2.8" fill="none"/><path d="M3473.7,1618.5 Q3480.7,1630.5 3487.7,1618.5 Q3494.7,1630.5 3501.7,1618.5 Q3508.7,1630.5 3515.7,1618.5 Q3522.7,1630.5 3529.7,1618.5 Q3536.7,1630.5 3543.7,1618.5 Q3550.7,1630.5 3557.7,1618.5 Q3564.7,1630.5 3571.7,1618.5 Q3576.9,1630.5 3582.0,1618.5" stroke="#ff1a1a" stroke-width="2.8" fill="none"/><path d="M3595.2,1618.5 Q3602.2,1630.5 3609.2,1618.5 Q3616.2,1630.5 3623.2,1618.5 Q3630.2,1630.5 3637.2,1618.5 Q3644.2,1630.5 3651.2,1618.5 Q3658.2,1630.5 3665.2,1618.5 Q3672.2,1630.5 3679.2,1618.5 Q3686.2,1630.5 3693.2,1618.5 Q3700.2,1630.5 3707.2,1618.5 Q3714.2,1630.5 3721.2,1618.5 Q3724.2,1630.5 3727.2,1618.5" stroke="#ff1a1a" stroke-width="2.8" fill="none"/><path d="M2036.0,1686.0 Q2043.0,1698.0 2050.0,1686.0 Q2057.0,1698.0 2064.0,1686.0 Q2071.0,1698.0 2078.0,1686.0 Q2085.0,1698.0 2092.0,1686.0 Q2099.0,1698.0 2106.0,1686.0 Q2113.0,1698.0 2120.0,1686.0 Q2127.0,1698.0 2134.0,1686.0 Q2141.0,1698.0 2148.0,1686.0 Q2155.0,1698.0 2162.0,1686.0 Q2169.0,1698.0 2176.0,1686.0 Q2183.0,1698.0 2190.0,1686.0" stroke="#ff1a1a" stroke-width="2.8" fill="none"/><path d="M2276.3,1686.0 Q2283.3,1698.0 2290.3,1686.0 Q2297.3,1698.0 2304.3,1686.0 Q2311.3,1698.0 2318.3,1686.0 Q2325.3,1698.0 2332.3,1686.0 Q2339.3,1698.0 2346.3,1686.0 Q2353.3,1698.0 2360.3,1686.0 Q2367.3,1698.0 2374.3,1686.0 Q2377.3,1698.0 2380.4,1686.0" stroke="#ff1a1a" stroke-width="2.8" fill="none"/><path d="M2393.7,1686.0 Q2400.7,1698.0 2407.7,1686.0 Q2414.7,1698.0 2421.7,1686.0 Q2428.7,1698.0 2435.7,1686.0 Q2442.7,1698.0 2449.7,1686.0 Q2456.7,1698.0 2463.7,1686.0 Q2470.7,1698.0 2477.7,1686.0 Q2484.7,1698.0 2491.7,1686.0 Q2498.7,1698.0 2505.7,1686.0 Q2512.7,1698.0 2519.7,1686.0 Q2526.7,1698.0 2533.7,1686.0 Q2540.7,1698.0 2547.7,1686.0 Q2554.7,1698.0 2561.7,1686.0 Q2565.9,1698.0 2570.0,1686.0" stroke="#ff1a1a" stroke-width="2.8" fill="none"/><path d="M2666.1,1686.0 Q2673.1,1698.0 2680.1,1686.0 Q2687.1,1698.0 2694.1,1686.0 Q2701.1,1698.0 2708.1,1686.0 Q2715.1,1698.0 2722.1,1686.0 Q2729.1,1698.0 2736.1,1686.0 Q2743.1,1698.0 2750.1,1686.0 Q2757.1,1698.0 2764.1,1686.0 Q2771.1,1698.0 2778.1,1686.0 Q2785.1,1698.0 2792.1,1686.0 Q2799.1,1698.0 2806.1,1686.0 Q2813.1,1698.0 2820.1,1686.0 Q2827.1,1698.0 2834.1,1686.0" stroke="#ff1a1a" stroke-width="2.8" fill="none"/><path d="M2847.6,1686.0 Q2854.6,1698.0 2861.6,1686.0 Q2868.6,1698.0 2875.6,1686.0 Q2882.6,1698.0 2889.6,1686.0 Q2896.6,1698.0 2903.6,1686.0 Q2910.6,1698.0 2917.6,1686.0 Q2924.6,1698.0 2931.6,1686.0 Q2938.6,1698.0 2945.6,1686.0 Q2952.6,1698.0 2959.6,1686.0 Q2966.6,1698.0 2973.6,1686.0 Q2977.4,1698.0 2981.1,1686.0" stroke="#ff1a1a" stroke-width="2.8" fill="none"/><path d="M2994.5,1686.0 Q3001.5,1698.0 3008.5,1686.0 Q3015.5,1698.0 3022.5,1686.0 Q3029.5,1698.0 3036.5,1686.0 Q3043.5,1698.0 3050.5,1686.0 Q3057.5,1698.0 3064.5,1686.0 Q3071.5,1698.0 3078.5,1686.0 Q3085.5,1698.0 3092.5,1686.0 Q3099.5,1698.0 3106.5,1686.0 Q3113.5,1698.0 3120.5,1686.0 Q3127.5,1698.0 3134.5,1686.0 Q3141.5,1698.0 3148.5,1686.0 Q3155.5,1698.0 3162.5,1686.0 Q3167.9,1698.0 3173.4,1686.0" stroke="#ff1a1a" stroke-width="2.8" fill="none"/><path d="M3186.7,1686.0 Q3193.7,1698.0 3200.7,1686.0 Q3207.7,1698.0 3214.7,1686.0 Q3221.7,1698.0 3228.7,1686.0 Q3235.7,1698.0 3242.7,1686.0 Q3249.7,1698.0 3256.7,1686.0 Q3263.7,1698.0 3270.7,1686.0 Q3277.7,1698.0 3284.7,1686.0 Q3291.7,1698.0 3298.7,1686.0 Q3305.7,1698.0 3312.7,1686.0 Q3319.7,1698.0 3326.7,1686.0 Q3333.7,1698.0 3340.7,1686.0 Q3347.7,1698.0 3354.7,1686.0 Q3361.7,1698.0 3368.7,1686.0 Q3375.7,1698.0 3382.7,1686.0 Q3389.7,1698.0 3396.7,1686.0 Q3403.7,1698.0 3410.7,1686.0 Q3417.7,1698.0 3424.7,1686.0 Q3429.9,1698.0 3435.0,1686.0" stroke="#ff1a1a" stroke-width="2.8" fill="none"/></svg>
<div style="position:absolute;left:113px;top:405px;width:400px;height:1363px;background:#f0f0f0;box-shadow:inset 0 0 0 3px #ababab"></div>
<div style="position:absolute;left:119px;top:411px;width:390px;height:72px;background:#bebebe"></div>
<div class="t" style="left:125.0px;top:427.8px;font-size:38px;color:#000;letter-spacing:-0.95px;font-weight:normal;word-spacing:3px;">Formular...</div>
<svg style="position:absolute;left:300px;top:420px;" width="70" height="40" viewBox="300 420 70 40"><polygon points="320,431 352,431 336,448" fill="#000"/></svg>
<svg style="position:absolute;left:100px;top:400px;" width="300" height="1380" viewBox="100 400 300 1380"><rect x="233" y="488" width="97" height="102" stroke="#99d1ff" stroke-width="2.5" fill="#cce8ff" rx="9"/><rect x="335" y="488" width="97" height="102" stroke="#99d1ff" stroke-width="2.5" fill="#cce8ff" rx="9"/><path d="M162,510 L203,543 L186,545 L195,566 L185,570 L176,549 L162,561 Z" fill="#fafafa" stroke="#3c3c3c" stroke-width="3"/><path d="M256,509 V568 H301 Z M266,534 V560 H292 Z" fill="#555" fill-rule="evenodd"/><rect x="255" y="562" width="60" height="10" stroke="#ef8a2e" stroke-width="3" fill="#f8d98b" rx="0"/><path d="M281,545 L308,518 L315,525 L288,552 L279,554 Z" fill="#5ea4dd" stroke="#1e88d0" stroke-width="2.5"/><path d="M355,520 L368,508 L362,524 L370,524" stroke="#ef8a2e" stroke-width="3" fill="none"/><polygon points="355,557 370,542 370,572" fill="#3c3c3c"/><rect x="153" y="626" width="60" height="63" stroke="#3c3c3c" stroke-width="3.0" fill="#fff" rx="0"/><rect x="153" y="626" width="60" height="8" stroke="none" stroke-width="3.0" fill="#555" rx="0"/><rect x="162" y="643" width="8" height="8" stroke="#3c3c3c" stroke-width="2.5" fill="none" rx="0"/><line x1="176" y1="647" x2="200" y2="647" stroke="#3c3c3c" stroke-width="2.5" stroke-linecap="butt"/><rect x="162" y="660" width="8" height="8" stroke="#3c3c3c" stroke-width="2.5" fill="none" rx="0"/><line x1="176" y1="664" x2="190" y2="664" stroke="#3c3c3c" stroke-width="2.5" stroke-linecap="butt"/><polygon points="185,688 215,656 215,688" fill="#f8d98b" stroke="#ef8a2e" stroke-width="3"/><path d="M255,656 L280,631 H313 V656 L280,689 Z" fill="#fafafa" stroke="#3c3c3c" stroke-width="3"/><circle cx="299" cy="644" r="4" stroke="#3c3c3c" stroke-width="2.5" fill="none"/><rect x="352" y="630" width="40" height="56" stroke="#3c3c3c" stroke-width="3.0" fill="#fff" rx="0"/><text x="356" y="674" font-family="Liberation Sans" font-size="36" fill="#1e88d0" font-weight="normal" font-style="normal" text-anchor="start" letter-spacing="0">A</text><rect x="153" y="742" width="60" height="58" stroke="#3c3c3c" stroke-width="3.0" fill="#fff" rx="0"/><path d="M160,776 L175,790 L206,752" stroke="#1e88d0" stroke-width="4" fill="none" /><circle cx="284" cy="771" r="29" stroke="#3c3c3c" stroke-width="3.0" fill="#fff"/><circle cx="284" cy="771" r="21" stroke="none" stroke-width="3.0" fill="#1e88d0"/><rect x="153" y="873" width="60" height="47" stroke="#3c3c3c" stroke-width="3.0" fill="#fff" rx="0"/><line x1="191" y1="873" x2="191" y2="920" stroke="#3c3c3c" stroke-width="3" stroke-linecap="butt"/><line x1="159" y1="881" x2="185" y2="881" stroke="#3c3c3c" stroke-width="2.5" stroke-linecap="butt"/><line x1="159" y1="890" x2="185" y2="890" stroke="#3c3c3c" stroke-width="2.5" stroke-linecap="butt"/><line x1="159" y1="899" x2="185" y2="899" stroke="#3c3c3c" stroke-width="2.5" stroke-linecap="butt"/><line x1="159" y1="909" x2="185" y2="909" stroke="#3c3c3c" stroke-width="2.5" stroke-linecap="butt"/><polygon points="196,887 206,887 201,880" fill="#3c3c3c"/><polygon points="196,906 206,906 201,913" fill="#3c3c3c"/><rect x="255" y="860" width="59" height="60" stroke="#3c3c3c" stroke-width="3.0" fill="#fff" rx="0"/><line x1="255" y1="872" x2="314" y2="872" stroke="#3c3c3c" stroke-width="3" stroke-linecap="butt"/><line x1="293" y1="860" x2="293" y2="920" stroke="#3c3c3c" stroke-width="3" stroke-linecap="butt"/><polygon points="295,862 312,862 303,870" fill="#3c3c3c"/><line x1="261" y1="882" x2="287" y2="882" stroke="#3c3c3c" stroke-width="2.5" stroke-linecap="butt"/><line x1="261" y1="891" x2="287" y2="891" stroke="#3c3c3c" stroke-width="2.5" stroke-linecap="butt"/><line x1="261" y1="900" x2="287" y2="900" stroke="#3c3c3c" stroke-width="2.5" stroke-linecap="butt"/><line x1="261" y1="909" x2="287" y2="909" stroke="#3c3c3c" stroke-width="2.5" stroke-linecap="butt"/><polygon points="298,887 308,887 303,880" fill="#3c3c3c"/><polygon points="298,906 308,906 303,913" fill="#3c3c3c"/><rect x="158" y="992" width="55" height="30" stroke="none" stroke-width="3.0" fill="#333" rx="3"/><rect x="153" y="986" width="51" height="29" stroke="#3c3c3c" stroke-width="3" fill="#fafafa" rx="3"/><rect x="259" y="976" width="58" height="61" stroke="none" stroke-width="3.0" fill="#333" rx="2"/><rect x="255" y="972" width="56" height="58" stroke="#3c3c3c" stroke-width="3" fill="#fafafa" rx="0"/><circle cx="271" cy="990" r="6" stroke="#ef8a2e" stroke-width="2.5" fill="#f8d98b"/><path d="M257,1028 L276,1009 L284,1017 L294,1006 L309,1022 V1028 Z" stroke="#1e88d0" stroke-width="2.5" fill="#8cc4ee" /><rect x="153" y="1094" width="60" height="55" stroke="#3c3c3c" stroke-width="3.0" fill="#fff" rx="0"/><rect x="153" y="1094" width="60" height="8" stroke="none" stroke-width="3.0" fill="#1e88d0" rx="0"/><circle cx="170" cy="1113" r="5" stroke="#3c3c3c" stroke-width="2.5" fill="none"/><circle cx="196" cy="1137" r="5" stroke="#3c3c3c" stroke-width="2.5" fill="none"/><line x1="168" y1="1142" x2="199" y2="1108" stroke="#3c3c3c" stroke-width="3" stroke-linecap="butt"/><rect x="255" y="1093" width="59" height="56" stroke="#3c3c3c" stroke-width="3.0" fill="#fff" rx="0"/><rect x="255" y="1093" width="59" height="10" stroke="none" stroke-width="3.0" fill="#1e88d0" rx="0"/><rect x="264" y="1087" width="5" height="10" stroke="none" stroke-width="3.0" fill="#333" rx="0"/><rect x="300" y="1087" width="5" height="10" stroke="none" stroke-width="3.0" fill="#333" rx="0"/><rect x="275" y="1093" width="20" height="8" stroke="none" stroke-width="3.0" fill="#8cc4ee" rx="0"/><text x="283" y="1146" font-family="Liberation Sans" font-size="48" fill="#333" font-weight="bold" font-style="normal" text-anchor="middle" letter-spacing="0">7</text><path d="M149,1222 L158,1213 V1261" stroke="#3c3c3c" stroke-width="2.6" fill="none" stroke-linejoin="round"/><path d="M168,1224 C168,1211 196,1209 196,1226 C196,1240 168,1248 168,1260 H199" stroke="#3c3c3c" stroke-width="2.6" fill="none" stroke-linejoin="round"/><path d="M204,1220 C208,1209 229,1209 229,1224 C229,1233 221,1236 213,1236 C223,1236 231,1241 231,1250 C231,1265 207,1265 202,1254" stroke="#3c3c3c" stroke-width="2.6" fill="none" /><rect x="254" y="1217" width="60" height="48" stroke="#3c3c3c" stroke-width="3" fill="#fafafa" rx="2"/><rect x="263" y="1208" width="43" height="18" stroke="none" stroke-width="3.0" fill="#f0f0f0" rx="0"/><text x="284" y="1228" font-family="Liberation Sans" font-size="24" fill="#333" font-weight="bold" font-style="normal" text-anchor="middle" letter-spacing="-1">XYZ</text><circle cx="183" cy="1352" r="30" stroke="#3c3c3c" stroke-width="3.0" fill="#fff"/><path d="M183,1329 V1355 H204" stroke="#3c3c3c" stroke-width="3" fill="none" /><rect x="252" y="1335" width="65" height="30" stroke="#1e60b0" stroke-width="4" fill="none" rx="0"/><circle cx="284" cy="1352" r="7" stroke="#1e88d0" stroke-width="3.0" fill="#8cc4ee"/><rect x="262" y="1366" width="15" height="14" stroke="#ef8a2e" stroke-width="3.0" fill="#f8d98b" rx="7"/><rect x="285" y="1356" width="15" height="24" stroke="#ef8a2e" stroke-width="3.0" fill="#f8d98b" rx="7"/><rect x="303" y="1353" width="15" height="27" stroke="#ef8a2e" stroke-width="3.0" fill="#f8d98b" rx="7"/><text x="147" y="1490" font-family="Liberation Sans" font-size="56" fill="#333" font-weight="normal" font-style="italic" text-anchor="start" letter-spacing="0">Aa</text><rect x="253" y="1439" width="59" height="58" stroke="#3c3c3c" stroke-width="3.0" fill="#fff" rx="0"/><rect x="253" y="1439" width="59" height="9" stroke="none" stroke-width="3.0" fill="#1e88d0" rx="0"/><rect x="255" y="1448" width="12" height="48" stroke="none" stroke-width="3.0" fill="#aaa" rx="0"/><line x1="253" y1="1460" x2="312" y2="1460" stroke="#3c3c3c" stroke-width="2.5" stroke-linecap="butt"/><line x1="253" y1="1472" x2="312" y2="1472" stroke="#3c3c3c" stroke-width="2.5" stroke-linecap="butt"/><line x1="253" y1="1484" x2="312" y2="1484" stroke="#3c3c3c" stroke-width="2.5" stroke-linecap="butt"/><line x1="267" y1="1448" x2="267" y2="1497" stroke="#3c3c3c" stroke-width="2.5" stroke-linecap="butt"/><line x1="289" y1="1448" x2="289" y2="1497" stroke="#3c3c3c" stroke-width="2.5" stroke-linecap="butt"/><path d="M363,1465 L372,1475 L363,1485 Z" fill="#fff" stroke="#3c3c3c" stroke-width="2.5"/><rect x="153" y="1555" width="59" height="58" stroke="#3c3c3c" stroke-width="3.0" fill="#fff" rx="0"/><circle cx="170" cy="1571" r="6" stroke="#ef8a2e" stroke-width="2.5" fill="#f8d98b"/><path d="M155,1611 L183,1590 V1611 Z" fill="#8cc4ee" stroke="#1e88d0" stroke-width="2.5"/><path d="M187,1578 L218,1601 L205,1603 L212,1619 L204,1622 L197,1606 L187,1615 Z" fill="#fafafa" stroke="#3c3c3c" stroke-width="3"/><path d="M257,1556 H284 L297,1569 V1612 H257 Z" fill="#fff" stroke="#3c3c3c" stroke-width="3"/><path d="M277,1578 L308,1601 L295,1603 L302,1619 L294,1622 L287,1606 L277,1615 Z" fill="#fafafa" stroke="#3c3c3c" stroke-width="3"/><rect x="162" y="1672" width="41" height="58" stroke="#3c3c3c" stroke-width="3.0" fill="#fff" rx="0"/><polygon points="168,1692 197,1692 182,1680" fill="#333"/><polygon points="168,1710 197,1710 182,1722" fill="#333"/><line x1="168" y1="1701" x2="197" y2="1701" stroke="#3c3c3c" stroke-width="4" stroke-linecap="butt"/><rect x="264" y="1672" width="41" height="25" stroke="#3c3c3c" stroke-width="3.0" fill="#fff" rx="0"/><rect x="264" y="1705" width="41" height="25" stroke="#3c3c3c" stroke-width="3.0" fill="#fff" rx="0"/><polygon points="272,1691 297,1691 284.5,1679" fill="#333"/><polygon points="272,1711 297,1711 284.5,1723" fill="#333"/></svg>
<div style="position:absolute;left:48px;top:343px;width:6px;height:18px;background:#555"></div>
<div style="position:absolute;left:48px;top:356px;width:21px;height:5px;background:#555"></div>
<div style="position:absolute;left:372px;top:71px;width:738px;height:1854px;box-sizing:border-box;background:#f9f9f9;border-style:solid;border-width:3px;border-color:#a0a0a0 #666 #666 #a0a0a0;box-shadow:inset 0 0 0 4px #ffffff, 7px 7px 10px rgba(0,0,0,0.42)"></div>
<div class="t" style="left:494.0px;top:97.3px;font-size:38px;color:#000;letter-spacing:-0.95px;font-weight:normal;word-spacing:3px;">Normal</div>
<div class="t" style="left:494.0px;top:164.7px;font-size:38px;color:#000;letter-spacing:-0.95px;font-weight:normal;word-spacing:3px;">Web</div>
<div class="t" style="left:494.0px;top:232.0px;font-size:38px;color:#000;letter-spacing:-0.95px;font-weight:normal;word-spacing:3px;">Seitenlayout</div>
<div style="position:absolute;left:474px;top:289px;width:629px;height:2px;background:#d9d9d9"></div>
<div class="t" style="left:494.0px;top:311.3px;font-size:38px;color:#000;letter-spacing:-0.95px;font-weight:normal;word-spacing:3px;">Benutzeroberfläche...</div>
<div style="position:absolute;left:381px;top:363px;width:720px;height:67px;background:#99cbf8"></div>
<div class="t" style="left:494.0px;top:378.6px;font-size:38px;color:#000;letter-spacing:-0.95px;font-weight:normal;word-spacing:3px;">Symbolleisten</div>
<div class="t" style="left:494.0px;top:446.0px;font-size:38px;color:#000;letter-spacing:-0.95px;font-weight:normal;word-spacing:3px;">Statusleiste</div>
<div style="position:absolute;left:474px;top:503px;width:629px;height:2px;background:#d9d9d9"></div>
<div class="t" style="left:494.0px;top:525.3px;font-size:38px;color:#000;letter-spacing:-0.95px;font-weight:normal;word-spacing:3px;">Lineale</div>
<div class="t" style="left:494.0px;top:592.6px;font-size:38px;color:#000;letter-spacing:-0.95px;font-weight:normal;word-spacing:3px;">Bildlaufleisten</div>
<div class="t" style="left:494.0px;top:660.0px;font-size:38px;color:#000;letter-spacing:-0.95px;font-weight:normal;word-spacing:3px;">Raster und Hilfslinien</div>
<div style="position:absolute;left:474px;top:717px;width:629px;height:2px;background:#d9d9d9"></div>
<div class="t" style="left:494.0px;top:739.3px;font-size:38px;color:#000;letter-spacing:-0.95px;font-weight:normal;word-spacing:3px;">Formatierungszeichen</div>
<div class="t" style="right:3080.0px;top:739.3px;font-size:38px;color:#000;letter-spacing:-0.95px;font-weight:normal;word-spacing:3px;">Strg+F10</div>
<div class="t" style="left:494.0px;top:806.6px;font-size:38px;color:#000;letter-spacing:-0.95px;font-weight:normal;word-spacing:3px;">Begrenzungen</div>
<div class="t" style="left:494.0px;top:874.0px;font-size:38px;color:#000;letter-spacing:-0.95px;font-weight:normal;word-spacing:3px;">Bilder und Diagramme</div>
<div class="t" style="left:494.0px;top:941.3px;font-size:38px;color:#000;letter-spacing:-0.95px;font-weight:normal;word-spacing:3px;">Zwischenräume</div>
<div style="position:absolute;left:474px;top:998px;width:629px;height:2px;background:#d9d9d9"></div>
<div class="t" style="left:494.0px;top:1020.6px;font-size:38px;color:#000;letter-spacing:-0.95px;font-weight:normal;word-spacing:3px;">Änderungen anzeigen</div>
<div class="t" style="left:494.0px;top:1087.9px;font-size:38px;color:#a0a0a0;letter-spacing:-0.95px;font-weight:normal;word-spacing:3px;">Kommentare</div>
<div class="t" style="left:494.0px;top:1155.3px;font-size:38px;color:#a0a0a0;letter-spacing:-0.95px;font-weight:normal;word-spacing:3px;">Erledigte Kommentare</div>
<div style="position:absolute;left:474px;top:1212px;width:629px;height:2px;background:#d9d9d9"></div>
<div class="t" style="left:494.0px;top:1234.6px;font-size:38px;color:#000;letter-spacing:-0.95px;font-weight:normal;word-spacing:3px;">Feldhinterlegungen</div>
<div class="t" style="right:3080.0px;top:1234.6px;font-size:38px;color:#000;letter-spacing:-0.95px;font-weight:normal;word-spacing:3px;">Strg+F8</div>
<div class="t" style="left:494.0px;top:1301.9px;font-size:38px;color:#000;letter-spacing:-0.95px;font-weight:normal;word-spacing:3px;">Feldnamen</div>
<div class="t" style="right:3080.0px;top:1301.9px;font-size:38px;color:#000;letter-spacing:-0.95px;font-weight:normal;word-spacing:3px;">Strg+F9</div>
<div class="t" style="left:494.0px;top:1369.3px;font-size:38px;color:#000;letter-spacing:-0.95px;font-weight:normal;word-spacing:3px;">Versteckte Absätze</div>
<div style="position:absolute;left:474px;top:1426px;width:629px;height:2px;background:#d9d9d9"></div>
<div class="t" style="left:494.0px;top:1448.6px;font-size:38px;color:#000;letter-spacing:-0.95px;font-weight:normal;word-spacing:3px;">Seitenleiste</div>
<div class="t" style="right:3080.0px;top:1448.6px;font-size:38px;color:#000;letter-spacing:-0.95px;font-weight:normal;word-spacing:3px;">Strg+F5</div>
<div class="t" style="left:494.0px;top:1515.9px;font-size:38px;color:#000;letter-spacing:-0.95px;font-weight:normal;word-spacing:3px;">Formatvorlagen</div>
<div class="t" style="right:3080.0px;top:1515.9px;font-size:38px;color:#000;letter-spacing:-0.95px;font-weight:normal;word-spacing:3px;">F11</div>
<div class="t" style="left:494.0px;top:1583.3px;font-size:38px;color:#000;letter-spacing:-0.95px;font-weight:normal;word-spacing:3px;">Galerie</div>
<div class="t" style="left:494.0px;top:1650.6px;font-size:38px;color:#000;letter-spacing:-0.95px;font-weight:normal;word-spacing:3px;">Navigator</div>
<div class="t" style="right:3080.0px;top:1650.6px;font-size:38px;color:#000;letter-spacing:-0.95px;font-weight:normal;word-spacing:3px;">F5</div>
<div class="t" style="left:494.0px;top:1717.9px;font-size:38px;color:#000;letter-spacing:-0.95px;font-weight:normal;word-spacing:3px;">Datenquellen</div>
<div class="t" style="right:3080.0px;top:1717.9px;font-size:38px;color:#000;letter-spacing:-0.95px;font-weight:normal;word-spacing:3px;">Strg+Umschalt+F4</div>
<div style="position:absolute;left:474px;top:1775px;width:629px;height:2px;background:#d9d9d9"></div>
<div class="t" style="left:494.0px;top:1797.2px;font-size:38px;color:#000;letter-spacing:-0.95px;font-weight:normal;word-spacing:3px;">Vollbild</div>
<div class="t" style="right:3080.0px;top:1797.2px;font-size:38px;color:#000;letter-spacing:-0.95px;font-weight:normal;word-spacing:3px;">Strg+Umschalt+J</div>
<div class="t" style="left:494.0px;top:1864.6px;font-size:38px;color:#000;letter-spacing:-0.95px;font-weight:normal;word-spacing:3px;">Maßstab</div>
<svg style="position:absolute;left:372px;top:71px;" width="740" height="1860" viewBox="372 71 740 1860"><rect x="395" y="82.66499999999999" width="66" height="66" stroke="#99d1ff" stroke-width="2.5" fill="#cce8ff" rx="8"/><path d="M420,137.665 H409 V90.66499999999999 H445 V108.66499999999999" stroke="#3c3c3c" stroke-width="3.2" fill="none" stroke-linejoin="round"/><rect x="431" y="114.66499999999999" width="14" height="10" stroke="#3c3c3c" stroke-width="3" fill="#fff" rx="0"/><line x1="432" y1="123.66499999999999" x2="444" y2="123.66499999999999" stroke="#1e88d0" stroke-width="3" stroke-linecap="butt"/><path d="M424,124.66499999999999 V132.665 Q424,137.665 429,137.665 H447 Q452,137.665 452,132.665 V124.66499999999999" stroke="#3c3c3c" stroke-width="3" fill="none" /><rect x="434" y="131.665" width="9" height="3" stroke="none" stroke-width="3.0" fill="#fff" rx="0"/><circle cx="428" cy="182.99499999999998" r="21" stroke="#1e88d0" stroke-width="3.4" fill="none"/><path d="M407,182.99499999999998 H449 M428,161.99499999999998 V203.99499999999998 M410,172.99499999999998 H446 M410,192.99499999999998 H446 M420,163.99499999999998 C413,176.99499999999998 413,188.99499999999998 420,201.99499999999998 M436,163.99499999999998 C443,176.99499999999998 443,188.99499999999998 436,201.99499999999998" stroke="#1e88d0" stroke-width="2.8" fill="none" /><polygon points="1067,245.32499999999996 1077,253.32499999999996 1067,261.32499999999993" fill="#222"/><polygon points="1067,391.98499999999996 1077,399.98499999999996 1067,407.98499999999996" fill="#222"/><path d="M415,464.31499999999994 L424,473.31499999999994 L441,455.31499999999994" stroke="#333" stroke-width="3" fill="none" /><polygon points="1067,538.6449999999999 1077,546.6449999999999 1067,554.6449999999999" fill="#222"/><path d="M411,562.6449999999999 V520.6449999999999 H435 L445,530.6449999999999 V562.6449999999999 Z" stroke="#3c3c3c" stroke-width="3" fill="#fff" /><rect x="405" y="549.6449999999999" width="46" height="11" stroke="#ef8a2e" stroke-width="3" fill="#f8d98b" rx="2"/><polygon points="1067,605.9749999999999 1077,613.9749999999999 1067,621.9749999999999" fill="#222"/><rect x="408" y="589.9749999999999" width="40" height="42" stroke="#3c3c3c" stroke-width="3" fill="#fff" rx="0"/><line x1="408" y1="610.9749999999999" x2="448" y2="610.9749999999999" stroke="#3c3c3c" stroke-width="3" stroke-linecap="butt"/><polygon points="416,605.9749999999999 440,605.9749999999999 428,595.9749999999999" fill="#333"/><polygon points="416,615.9749999999999 440,615.9749999999999 428,625.9749999999999" fill="#333"/><polygon points="1067,673.305 1077,681.305 1067,689.305" fill="#222"/><rect x="405" y="656.305" width="46" height="45" stroke="#3c3c3c" stroke-width="3" fill="#fff" rx="0"/><rect x="410.5" y="661.805" width="5" height="5" stroke="none" stroke-width="3.0" fill="#1e88d0" rx="0"/><rect x="410.5" y="675.805" width="5" height="5" stroke="none" stroke-width="3.0" fill="#1e88d0" rx="0"/><rect x="410.5" y="689.805" width="5" height="5" stroke="none" stroke-width="3.0" fill="#1e88d0" rx="0"/><rect x="425.5" y="661.805" width="5" height="5" stroke="none" stroke-width="3.0" fill="#1e88d0" rx="0"/><rect x="425.5" y="675.805" width="5" height="5" stroke="none" stroke-width="3.0" fill="#1e88d0" rx="0"/><rect x="425.5" y="689.805" width="5" height="5" stroke="none" stroke-width="3.0" fill="#1e88d0" rx="0"/><rect x="440.5" y="661.805" width="5" height="5" stroke="none" stroke-width="3.0" fill="#1e88d0" rx="0"/><rect x="440.5" y="675.805" width="5" height="5" stroke="none" stroke-width="3.0" fill="#1e88d0" rx="0"/><rect x="440.5" y="689.805" width="5" height="5" stroke="none" stroke-width="3.0" fill="#1e88d0" rx="0"/><path d="M428,734.635 C410,734.635 410,754.635 428,754.635 Z" stroke="#3c3c3c" stroke-width="3" fill="#c4c4c4" /><line x1="427" y1="734.635" x2="449" y2="734.635" stroke="#3c3c3c" stroke-width="3.2" stroke-linecap="butt"/><line x1="428" y1="734.635" x2="428" y2="781.635" stroke="#3c3c3c" stroke-width="3.2" stroke-linecap="butt"/><line x1="438" y1="734.635" x2="438" y2="781.635" stroke="#3c3c3c" stroke-width="3.2" stroke-linecap="butt"/><path d="M415,824.965 L424,833.965 L441,815.965" stroke="#333" stroke-width="3" fill="none" /><path d="M415,892.2950000000001 L424,901.2950000000001 L441,883.2950000000001" stroke="#333" stroke-width="3" fill="none" /><rect x="395" y="926.6250000000001" width="66" height="66" stroke="#99d1ff" stroke-width="2.5" fill="#cce8ff" rx="8"/><path d="M424,948.6250000000001 H410 V970.6250000000001 H424 M432,948.6250000000001 H446 V970.6250000000001 H432" stroke="#3c3c3c" stroke-width="3.4" fill="none" /><path d="M428,935.6250000000001 V983.6250000000001 M422,942.6250000000001 L428,935.6250000000001 L434,942.6250000000001 M422,976.6250000000001 L428,983.6250000000001 L434,976.6250000000001" stroke="#1e88d0" stroke-width="3" fill="none" /><path d="M415,1038.9550000000002 L424,1047.9550000000002 L441,1029.9550000000002" stroke="#333" stroke-width="3" fill="none" /><path d="M415,1252.945 L424,1261.945 L441,1243.945" stroke="#333" stroke-width="3" fill="none" /><rect x="395" y="1433.9349999999997" width="66" height="66" stroke="#99d1ff" stroke-width="2.5" fill="#cce8ff" rx="8"/><rect x="404" y="1445.9349999999997" width="48" height="42" stroke="#3c3c3c" stroke-width="3.4" fill="#fff" rx="0"/><rect x="404" y="1445.9349999999997" width="48" height="7" stroke="none" stroke-width="3.0" fill="#3c3c3c" rx="0"/><rect x="434" y="1452.9349999999997" width="18" height="35" stroke="#1e88d0" stroke-width="3" fill="#8cc4ee" rx="0"/><path d="M438,1470.9349999999997 H414 M422,1462.9349999999997 L414,1470.9349999999997 L422,1478.9349999999997" stroke="#1e88d0" stroke-width="3" fill="none" /><path d="M404,1556.2649999999996 L418,1511.2649999999996 L430,1552.2649999999996" stroke="#3c3c3c" stroke-width="3" fill="none" /><path d="M424,1552.2649999999996 L448,1519.2649999999996 L452,1524.2649999999996 L434,1554.2649999999996" stroke="#3c3c3c" stroke-width="3" fill="#fff" /><path d="M410,1558.2649999999996 C414,1546.2649999999996 422,1546.2649999999996 432,1550.2649999999996 C428,1558.2649999999996 418,1559.2649999999996 410,1558.2649999999996 Z" stroke="#1e88d0" stroke-width="3" fill="#8cc4ee" /><path d="M404,1613.5949999999996 V1578.5949999999996 H418 L423,1584.5949999999996 H440 V1591.5949999999996" stroke="#ef8a2e" stroke-width="3" fill="#f8d98b" /><rect x="420" y="1592.5949999999996" width="32" height="32" stroke="#3c3c3c" stroke-width="3.4" fill="#fff" rx="0"/><circle cx="428" cy="1600.5949999999996" r="4" stroke="#ef8a2e" stroke-width="2.5" fill="#f8d98b"/><path d="M422,1622.5949999999996 L432,1611.5949999999996 L438,1616.5949999999996 L444,1609.5949999999996 L450,1615.5949999999996 V1622.5949999999996 Z" stroke="#1e88d0" stroke-width="2.5" fill="#8cc4ee" /><circle cx="428" cy="1668.9249999999995" r="23" stroke="#3c3c3c" stroke-width="3.4" fill="none"/><polygon points="441,1655.9249999999995 433,1673.9249999999995 415,1681.9249999999995 423,1663.9249999999995" fill="#1e88d0"/><circle cx="428" cy="1668.9249999999995" r="4" stroke="none" stroke-width="3.0" fill="#fff"/><path d="M410,1718.2549999999994 V1754.2549999999994 C410,1762.2549999999994 446,1762.2549999999994 446,1754.2549999999994 V1718.2549999999994" stroke="#ef8a2e" stroke-width="3" fill="#f8d98b" /><ellipse cx="428" cy="1718.2549999999994" rx="18" ry="6" stroke="#ef8a2e" stroke-width="3" fill="#f8d98b"/><rect x="404" y="1795.5849999999994" width="48" height="41" stroke="#3c3c3c" stroke-width="3.4" fill="#fff" rx="0"/><path d="M413,1827.5849999999994 L443,1804.5849999999994" stroke="#1e88d0" stroke-width="3.4" fill="none" /><polygon points="445,1801.5849999999994 432,1802.5849999999994 444,1814.5849999999994" fill="#1e88d0"/><polygon points="411,1830.5849999999994 424,1829.5849999999994 412,1817.5849999999994" fill="#1e88d0"/><polygon points="1067,1877.9149999999993 1077,1885.9149999999993 1067,1893.9149999999993" fill="#222"/></svg>
<div style="position:absolute;left:1101px;top:347px;width:936px;height:2117px;box-sizing:border-box;background:#f9f9f9;border-style:solid;border-width:3px;border-color:#a0a0a0 #666 #666 #a0a0a0;box-shadow:inset 0 0 0 4px #ffffff, 7px 7px 10px rgba(0,0,0,0.42)"></div>
<div class="t" style="left:1221.0px;top:372.3px;font-size:38px;color:#000;letter-spacing:-0.95px;font-weight:normal;word-spacing:3px;">3D-Einstellungen</div>
<div class="t" style="left:1221.0px;top:439.7px;font-size:38px;color:#000;letter-spacing:-0.95px;font-weight:normal;word-spacing:3px;">Änderungen verfolgen</div>
<div class="t" style="left:1221.0px;top:507.0px;font-size:38px;color:#000;letter-spacing:-0.95px;font-weight:normal;word-spacing:3px;">Aufzählungszeichen und Nummerierung</div>
<div class="t" style="left:1221.0px;top:574.3px;font-size:38px;color:#000;letter-spacing:-0.95px;font-weight:normal;word-spacing:3px;">Bild</div>
<div class="t" style="left:1221.0px;top:641.6px;font-size:38px;color:#000;letter-spacing:-0.95px;font-weight:normal;word-spacing:3px;">Einfügen</div>
<div class="t" style="left:1221.0px;top:709.0px;font-size:38px;color:#000;letter-spacing:-0.95px;font-weight:normal;word-spacing:3px;">Extras</div>
<div class="t" style="left:1221.0px;top:776.3px;font-size:38px;color:#000;letter-spacing:-0.95px;font-weight:normal;word-spacing:3px;">Fontwork</div>
<div class="t" style="left:1221.0px;top:843.6px;font-size:38px;color:#000;letter-spacing:-0.95px;font-weight:normal;word-spacing:3px;">Formatierungen</div>
<div class="t" style="left:1221.0px;top:911.0px;font-size:38px;color:#000;letter-spacing:-0.95px;font-weight:normal;word-spacing:3px;">Formatierungen (Formatvorlagen)</div>
<div style="position:absolute;left:1110px;top:963px;width:917px;height:67px;background:#99cbf8"></div>
<div class="t" style="left:1221.0px;top:978.3px;font-size:38px;color:#000;letter-spacing:-0.95px;font-weight:normal;word-spacing:3px;">Formular-Steuerelemente</div>
<div class="t" style="left:1221.0px;top:1045.6px;font-size:38px;color:#000;letter-spacing:-0.95px;font-weight:normal;word-spacing:3px;">Formularentwurf</div>
<div class="t" style="left:1221.0px;top:1113.0px;font-size:38px;color:#000;letter-spacing:-0.95px;font-weight:normal;word-spacing:3px;">Formularnavigation</div>
<div class="t" style="left:1221.0px;top:1180.3px;font-size:38px;color:#000;letter-spacing:-0.95px;font-weight:normal;word-spacing:3px;">LibreLogo</div>
<div class="t" style="left:1221.0px;top:1247.6px;font-size:38px;color:#000;letter-spacing:-0.95px;font-weight:normal;word-spacing:3px;">Medienwiedergabe</div>
<div class="t" style="left:1221.0px;top:1314.9px;font-size:38px;color:#000;letter-spacing:-0.95px;font-weight:normal;word-spacing:3px;">Navigation</div>
<div class="t" style="left:1221.0px;top:1382.3px;font-size:38px;color:#000;letter-spacing:-0.95px;font-weight:normal;word-spacing:3px;">Objekte ausrichten</div>
<div class="t" style="left:1221.0px;top:1449.6px;font-size:38px;color:#000;letter-spacing:-0.95px;font-weight:normal;word-spacing:3px;">OLE-Objekt</div>
<div class="t" style="left:1221.0px;top:1516.9px;font-size:38px;color:#000;letter-spacing:-0.95px;font-weight:normal;word-spacing:3px;">Punkte bearbeiten</div>
<div class="t" style="left:1221.0px;top:1584.3px;font-size:38px;color:#000;letter-spacing:-0.95px;font-weight:normal;word-spacing:3px;">Rahmen</div>
<div class="t" style="left:1221.0px;top:1651.6px;font-size:38px;color:#000;letter-spacing:-0.95px;font-weight:normal;word-spacing:3px;">Serienbrief</div>
<div class="t" style="left:1221.0px;top:1718.9px;font-size:38px;color:#000;letter-spacing:-0.95px;font-weight:normal;word-spacing:3px;">Standard</div>
<div class="t" style="left:1221.0px;top:1786.3px;font-size:38px;color:#000;letter-spacing:-0.95px;font-weight:normal;word-spacing:3px;">Standard (kompakt)</div>
<div class="t" style="left:1221.0px;top:1853.6px;font-size:38px;color:#000;letter-spacing:-0.95px;font-weight:normal;word-spacing:3px;">Suchen</div>
<div class="t" style="left:1221.0px;top:1920.9px;font-size:38px;color:#000;letter-spacing:-0.95px;font-weight:normal;word-spacing:3px;">Tabelle</div>
<div class="t" style="left:1221.0px;top:1988.2px;font-size:38px;color:#000;letter-spacing:-0.95px;font-weight:normal;word-spacing:3px;">Textobjekt</div>
<div class="t" style="left:1221.0px;top:2055.6px;font-size:38px;color:#000;letter-spacing:-0.95px;font-weight:normal;word-spacing:3px;">TSCP-Klassifizierung</div>
<div class="t" style="left:1221.0px;top:2122.9px;font-size:38px;color:#000;letter-spacing:-0.95px;font-weight:normal;word-spacing:3px;">Zeichnung</div>
<div class="t" style="left:1221.0px;top:2190.2px;font-size:38px;color:#000;letter-spacing:-0.95px;font-weight:normal;word-spacing:3px;">Zeichnungsobjekt-Eigenschaften</div>
<div style="position:absolute;left:1202px;top:2247px;width:826px;height:2px;background:#d9d9d9"></div>
<div class="t" style="left:1221.0px;top:2269.6px;font-size:38px;color:#000;letter-spacing:-0.95px;font-weight:normal;word-spacing:3px;">Anpassen...</div>
<div class="t" style="left:1221.0px;top:2336.9px;font-size:38px;color:#a0a0a0;letter-spacing:-0.95px;font-weight:normal;word-spacing:3px;">Wiederherstellen</div>
<div class="t" style="left:1221.0px;top:2404.2px;font-size:38px;color:#000;letter-spacing:-0.95px;font-weight:normal;word-spacing:3px;">Symbolleisten fixieren</div>
<svg style="position:absolute;left:1101px;top:347px;" width="940" height="2120" viewBox="1101 347 940 2120"><path d="M1143,861.9750000000001 L1152,870.9750000000001 L1169,852.9750000000001" stroke="#333" stroke-width="3" fill="none" /><path d="M1143,996.6350000000002 L1152,1005.6350000000002 L1169,987.6350000000002" stroke="#333" stroke-width="3" fill="none" /><path d="M1143,1737.2649999999994 L1152,1746.2649999999994 L1169,1728.2649999999994" stroke="#333" stroke-width="3" fill="none" /><rect x="1133" y="2265.904999999999" width="46" height="45" stroke="#3c3c3c" stroke-width="3.4" fill="#fff" rx="0"/><rect x="1133" y="2265.904999999999" width="46" height="7" stroke="none" stroke-width="3.0" fill="#555" rx="0"/><line x1="1140" y1="2285.904999999999" x2="1172" y2="2285.904999999999" stroke="#3c3c3c" stroke-width="2.5" stroke-linecap="butt"/><line x1="1140" y1="2298.904999999999" x2="1172" y2="2298.904999999999" stroke="#3c3c3c" stroke-width="2.5" stroke-linecap="butt"/><circle cx="1162" cy="2285.904999999999" r="3.5" stroke="#1e88d0" stroke-width="2.5" fill="#8cc4ee"/><circle cx="1150" cy="2298.904999999999" r="3.5" stroke="#1e88d0" stroke-width="2.5" fill="#8cc4ee"/><path d="M1143,2422.5649999999987 L1152,2431.5649999999987 L1169,2413.5649999999987" stroke="#333" stroke-width="3" fill="none" /></svg>
<div style="position:absolute;left:0px;top:0px;width:29px;height:2489px;background:#000"></div>
<div style="position:absolute;left:29px;top:0px;width:7px;height:2489px;background:#b5e61d"></div>
<div style="position:absolute;left:29px;top:0px;width:4105px;height:7px;background:#b5e61d"></div>
<div style="position:absolute;left:4127px;top:0px;width:7px;height:2489px;background:#b5e61d"></div>
<div style="position:absolute;left:29px;top:2482px;width:4105px;height:7px;background:#b5e61d"></div>
<div style="position:absolute;left:252.5px;top:1px;width:144px;height:142px;background:#b5e61d;border-radius:50%"></div>
<div class="t" style="left:264.5px;width:120px;text-align:center;top:35.2px;font-size:76px;color:#fff;">1</div>
<div style="position:absolute;left:843px;top:327px;width:144px;height:142px;background:#b5e61d;border-radius:50%"></div>
<div class="t" style="left:855.0px;width:120px;text-align:center;top:361.2px;font-size:76px;color:#fff;">2</div>
<div style="position:absolute;left:1810px;top:923.5px;width:144px;height:142px;background:#b5e61d;border-radius:50%"></div>
<div class="t" style="left:1822.0px;width:120px;text-align:center;top:957.7px;font-size:76px;color:#fff;">3</div>
<div style="position:absolute;left:0.5px;top:923px;width:144px;height:142px;background:#b5e61d;border-radius:50%"></div>
<div class="t" style="left:12.5px;width:120px;text-align:center;top:957.2px;font-size:76px;color:#fff;">4</div>
</body></html>
